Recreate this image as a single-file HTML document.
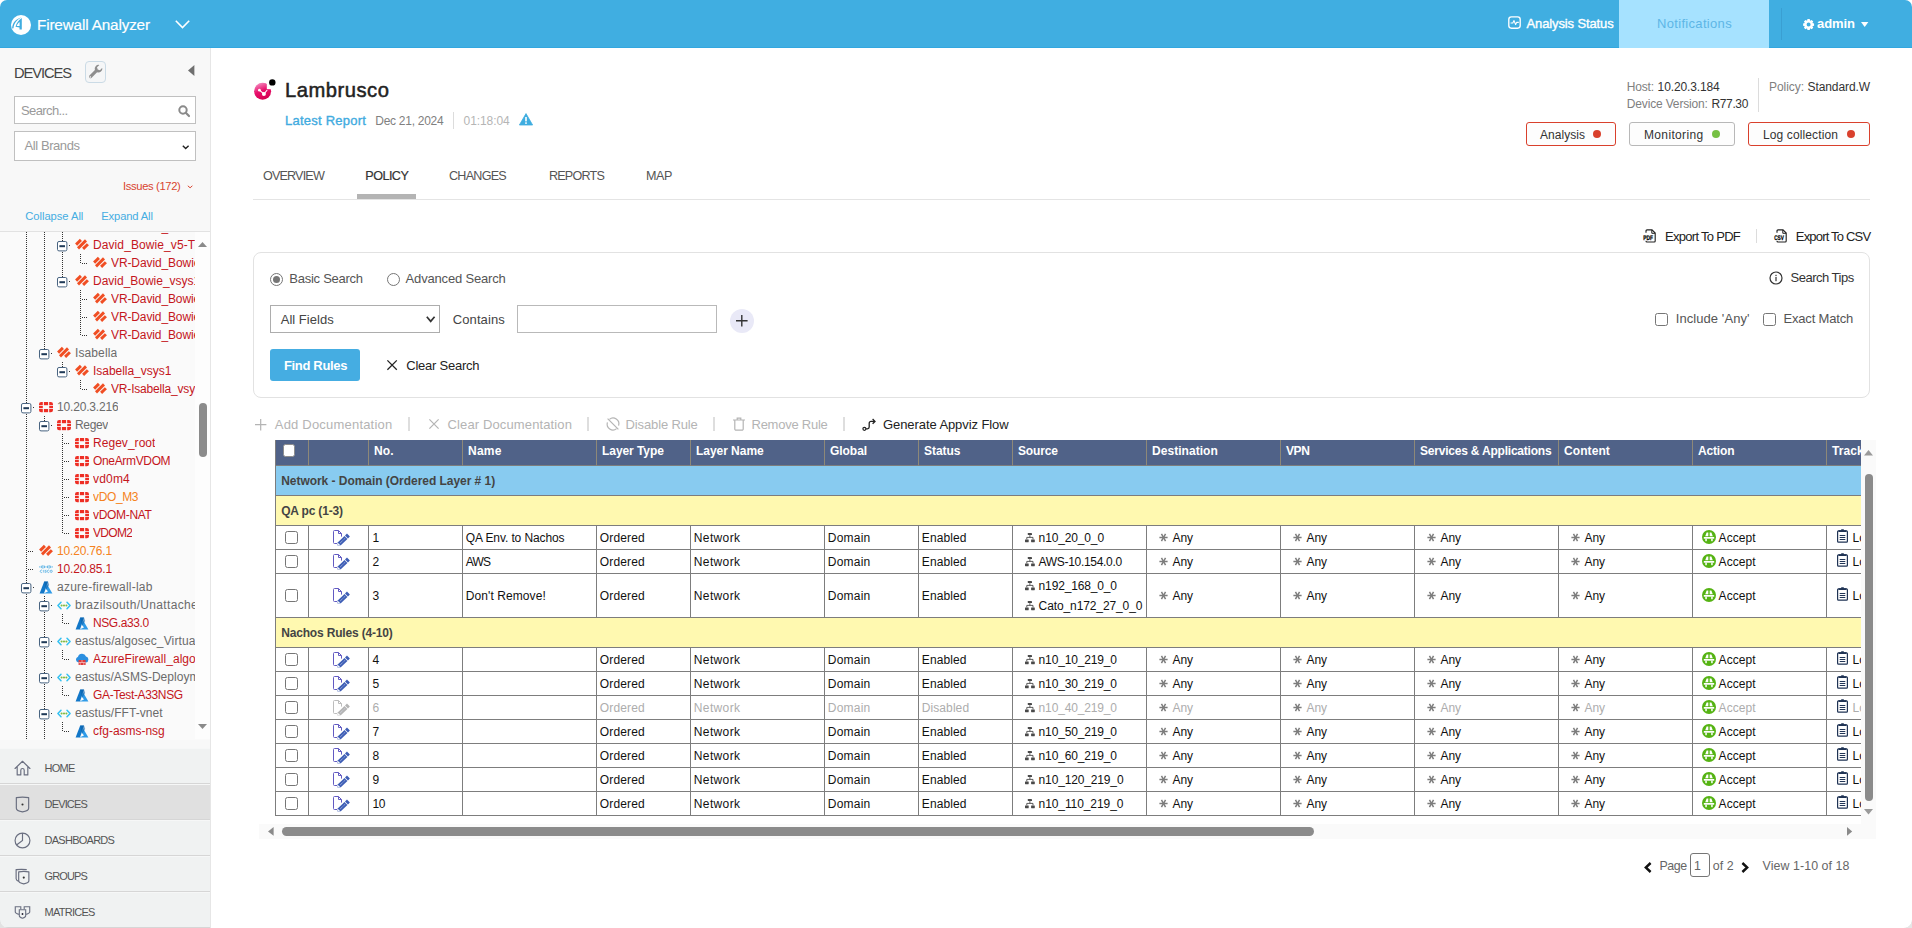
<!DOCTYPE html>
<html lang="en"><head><meta charset="utf-8"><title>Firewall Analyzer - Lambrusco - Policy</title>
<style>
*{box-sizing:border-box;margin:0;padding:0}
html,body{width:1912px;height:928px;overflow:hidden;background:#fff}
body{font-family:"Liberation Sans",sans-serif;color:#333}
#app{position:relative;width:1912px;height:928px;overflow:hidden;background:#fff;border-radius:7px 7px 0 0}
.t{position:absolute;white-space:nowrap;display:block}
.b{position:absolute;display:block}
.i{position:absolute;display:block;overflow:visible}
header{position:absolute;left:0;top:0;width:1912px;height:48px;background:#40aee1;box-shadow:inset 0 -1px 0 #33a7df}
.crn{position:absolute;bottom:0;width:8px;height:8px}
aside{position:absolute;left:0;top:48px;width:211px;height:880px;background:#f8f8f8;border-right:1px solid #e6e6e6}
main{position:absolute;left:211px;top:48px;width:1701px;height:880px;background:#fff}
a{text-decoration:none;color:inherit}
h1,h2,h3{font-weight:normal}
table{border-collapse:collapse;table-layout:fixed;position:absolute;left:0;top:0}
td,th{border:1px solid #7d7d7d;padding:0;overflow:hidden;white-space:nowrap;text-align:left;vertical-align:middle;position:relative}
</style></head>
<body>
<div id="app">
<header><svg class="i" style="left:11.4px;top:14.5px" width="20" height="20" viewBox="0 0 20 20" ><circle cx="10" cy="10" r="10" fill="#fff"/><path d="M1.1 13.4 C1.3 8 5 3.6 10.6 2.5 C6 4.5 2.9 8.4 2.5 13.3 Z" fill="#3fade0"/><path d="M10.8 3.1 L10.8 14.4 L8.5 14.4 L8.5 12.5 L4.5 11.7 C5.5 8 7.6 5 10.8 3.1 Z M8.6 6.9 L8.6 10.9 L5.7 10.9 C6.3 9.3 7.2 7.9 8.6 6.9 Z" fill="#3fade0" fill-rule="evenodd"/></svg><h1 class="t" style="left:37px;top:14.600000000000001px;font-size:15.3px;line-height:19px;letter-spacing:-0.16px;color:#fff;-webkit-text-stroke:0.2px #fff;">Firewall Analyzer</h1><svg class="i" style="left:175px;top:19.5px" width="15" height="8.5" viewBox="0 0 15 8.5" ><path d="M0.8 0.8 L7.5 7.5 L14.2 0.8" fill="none" stroke="#fff" stroke-width="1.6"/></svg><svg class="i" style="left:1507.8px;top:15.5px" width="13" height="13" viewBox="0 0 13 13" ><rect x="0.8" y="0.8" width="11.4" height="11.4" rx="2.6" fill="none" stroke="#fff" stroke-width="1.35"/><path d="M2.6 7 H4.8 L6 4.6 L7.6 8.6 L8.6 6.4 H10.8" fill="none" stroke="#fff" stroke-width="1.1" stroke-linejoin="round"/></svg><span class="t" style="left:1526.5px;top:15px;font-size:13px;line-height:17px;letter-spacing:-0.12px;color:#fff;-webkit-text-stroke:0.35px #fff;">Analysis Status</span><div class="b" style="left:1619px;top:0px;width:150px;height:48px;background:#a6e2ff"></div><a class="t" href="#" style="left:1657px;top:15px;font-size:13px;line-height:17px;letter-spacing:0.32px;color:#5db6e6;">Notifications</a><div class="b" style="left:1781px;top:8px;width:1px;height:32px;background:#3a9fd2"></div><svg class="i" style="left:1802.6px;top:18.6px" width="11.2" height="11.2" viewBox="0 0 11.2 11.2" ><path d="M11.09 4.49 L11.09 6.71 L9.39 7.16 L9.38 7.18 L10.27 8.69 L8.69 10.27 L7.18 9.38 L7.16 9.39 L6.71 11.09 L4.49 11.09 L4.04 9.39 L4.02 9.38 L2.51 10.27 L0.93 8.69 L1.82 7.18 L1.81 7.16 L0.11 6.71 L0.11 4.49 L1.81 4.04 L1.82 4.02 L0.93 2.51 L2.51 0.93 L4.02 1.82 L4.04 1.81 L4.49 0.11 L6.71 0.11 L7.16 1.81 L7.18 1.82 L8.69 0.93 L10.27 2.51 L9.38 4.02 L9.39 4.04 Z M5.6 3.6 A2 2 0 1 0 5.6 7.6 A2 2 0 1 0 5.6 3.6 Z" fill="#fff" fill-rule="evenodd"/></svg><span class="t" style="left:1817px;top:15.2px;font-size:13px;line-height:17px;letter-spacing:-0.06px;color:#fff;font-weight:bold;">admin</span><svg class="i" style="left:1860.5px;top:22px" width="7.4" height="5" viewBox="0 0 7.4 5" ><path d="M0 0 L3.7 5 L7.4 0 Z" fill="#fff"/></svg></header>
<aside><h2 class="t" style="left:14px;top:15.599999999999994px;font-size:14.7px;line-height:18px;letter-spacing:-1.08px;color:#444;">DEVICES</h2><div class="b" style="left:85px;top:13px;width:21px;height:22px;border:1px solid #cbdbe6;border-radius:4px;background:#f5f6f7"></div><svg class="i" style="left:87.8px;top:16.200000000000003px" width="15.5" height="15.5" viewBox="0 0 15.5 15.5" ><path d="M11.4 0.9 A4 4 0 0 0 6.9 6.1 L1.2 11.8 A1.6 1.6 0 0 0 3.4 14 L9.1 8.3 A4 4 0 0 0 14.3 3.8 L11.9 6.2 L9.7 5.5 L9 3.3 Z M2.3 12.2 A0.7 0.7 0 1 0 2.31 12.2 Z" fill="#8e8e8e" fill-rule="evenodd"/></svg><svg class="i" style="left:188px;top:17px" width="6.4" height="11" viewBox="0 0 6.4 11" ><path d="M6.4 0 L0 5.5 L6.4 11 Z" fill="#6f6f6f"/></svg><div class="b" style="left:14px;top:48px;width:182px;height:28px;border:1px solid #c0c0c0;background:#fff"></div><span class="t" style="left:21px;top:53.8px;font-size:13px;line-height:17px;letter-spacing:-0.61px;color:#9a9a9a;">Search...</span><svg class="i" style="left:178px;top:57px" width="12" height="12" viewBox="0 0 12 12" ><circle cx="5" cy="5" r="3.7" fill="none" stroke="#8a8a8a" stroke-width="2"/><path d="M7.8 7.8 L11 11" stroke="#8a8a8a" stroke-width="2.2" stroke-linecap="round"/></svg><div class="b" style="left:14px;top:83px;width:182px;height:30px;border:1px solid #c0c0c0;background:#fff"></div><span class="t" style="left:24.5px;top:88.6px;font-size:13px;line-height:17px;letter-spacing:-0.42px;color:#9a9a9a;">All Brands</span><svg class="i" style="left:182.3px;top:96.6px" width="7.4" height="4.6" viewBox="0 0 7.4 4.6" ><path d="M0.8 0.8 L3.7 3.5999999999999996 L6.6000000000000005 0.8" fill="none" stroke="#222" stroke-width="1.4"/></svg><a class="t" href="#" style="left:123px;top:131px;font-size:11.2px;line-height:14px;letter-spacing:-0.34px;color:#d9442f;">Issues (172)</a><svg class="i" style="left:187px;top:136.6px" width="6.2" height="3.8" viewBox="0 0 6.2 3.8" ><path d="M0.8 0.8 L3.1 2.8 L5.4 0.8" fill="none" stroke="#d9442f" stroke-width="1"/></svg><a class="t" href="#" style="left:25.3px;top:160.8px;font-size:11.2px;line-height:14px;letter-spacing:-0.04px;color:#45ade2;">Collapse All</a><a class="t" href="#" style="left:101.3px;top:160.8px;font-size:11.2px;line-height:14px;letter-spacing:-0.14px;color:#45ade2;">Expand All</a><div class="b" style="left:0;top:183px;width:210px;height:509px;border-top:1px solid #e2e2e2;background:#fafafa;overflow:hidden"><div class="b" style="left:26px;top:0px;width:1px;height:507px;background:repeating-linear-gradient(to bottom,#333 0,#333 1px,transparent 1px,transparent 2px)"></div><div class="b" style="left:44px;top:0px;width:1px;height:122px;background:repeating-linear-gradient(to bottom,#333 0,#333 1px,transparent 1px,transparent 2px)"></div><div class="b" style="left:44px;top:184px;width:1px;height:10px;background:repeating-linear-gradient(to bottom,#333 0,#333 1px,transparent 1px,transparent 2px)"></div><div class="b" style="left:44px;top:364px;width:1px;height:143px;background:repeating-linear-gradient(to bottom,#333 0,#333 1px,transparent 1px,transparent 2px)"></div><div class="b" style="left:62px;top:0px;width:1px;height:50px;background:repeating-linear-gradient(to bottom,#333 0,#333 1px,transparent 1px,transparent 2px)"></div><div class="b" style="left:62px;top:130px;width:1px;height:10px;background:repeating-linear-gradient(to bottom,#333 0,#333 1px,transparent 1px,transparent 2px)"></div><div class="b" style="left:62px;top:202px;width:1px;height:100px;background:repeating-linear-gradient(to bottom,#333 0,#333 1px,transparent 1px,transparent 2px)"></div><div class="b" style="left:62px;top:382px;width:1px;height:10px;background:repeating-linear-gradient(to bottom,#333 0,#333 1px,transparent 1px,transparent 2px)"></div><div class="b" style="left:62px;top:418px;width:1px;height:10px;background:repeating-linear-gradient(to bottom,#333 0,#333 1px,transparent 1px,transparent 2px)"></div><div class="b" style="left:62px;top:454px;width:1px;height:10px;background:repeating-linear-gradient(to bottom,#333 0,#333 1px,transparent 1px,transparent 2px)"></div><div class="b" style="left:62px;top:490px;width:1px;height:10px;background:repeating-linear-gradient(to bottom,#333 0,#333 1px,transparent 1px,transparent 2px)"></div><div class="b" style="left:80px;top:22px;width:1px;height:10px;background:repeating-linear-gradient(to bottom,#333 0,#333 1px,transparent 1px,transparent 2px)"></div><div class="b" style="left:80px;top:58px;width:1px;height:46px;background:repeating-linear-gradient(to bottom,#333 0,#333 1px,transparent 1px,transparent 2px)"></div><div class="b" style="left:80px;top:148px;width:1px;height:10px;background:repeating-linear-gradient(to bottom,#333 0,#333 1px,transparent 1px,transparent 2px)"></div><div class="b" style="left:81px;top:-5px;width:6px;height:1px;background:repeating-linear-gradient(to right,transparent 0,transparent 1px,#333 1px,#333 2px)"></div><svg class="i" style="left:93px;top:-10.6px" width="14" height="11" viewBox="0 0 14 11" ><g stroke="#f04e23" stroke-width="2.9" stroke-linecap="butt"><path d="M1.1 5.6 L5.9 0.9"/><path d="M3 9.4 L11 1.4"/><path d="M8.1 9.9 L12.9 5.2"/></g></svg><span class="t" style="left:111px;top:-13px;font-size:12px;line-height:16px;letter-spacing:-0.1px;color:#c4161c;max-width:84px;overflow:hidden">VR-David_Bowie_v5</span><svg class="i" style="left:57px;top:8.8px" width="10.4" height="10.4" viewBox="0 0 10.4 10.4" ><rect x="0.5" y="0.5" width="9.4" height="9.4" rx="1.5" fill="#fff" stroke="#46627f"/><rect x="2.4" y="4.2" width="5.6" height="2" fill="#1f3a57"/></svg><div class="b" style="left:69px;top:13px;width:2px;height:1px;background:repeating-linear-gradient(to right,#333 0,#333 1px,transparent 1px,transparent 2px)"></div><svg class="i" style="left:75px;top:7.4px" width="14" height="11" viewBox="0 0 14 11" ><g stroke="#f04e23" stroke-width="2.9" stroke-linecap="butt"><path d="M1.1 5.6 L5.9 0.9"/><path d="M3 9.4 L11 1.4"/><path d="M8.1 9.9 L12.9 5.2"/></g></svg><span class="t" style="left:93px;top:5px;font-size:12px;line-height:16px;letter-spacing:0.09px;color:#c4161c;max-width:102px;overflow:hidden">David_Bowie_v5-Tr</span><div class="b" style="left:81px;top:31px;width:6px;height:1px;background:repeating-linear-gradient(to right,transparent 0,transparent 1px,#333 1px,#333 2px)"></div><svg class="i" style="left:93px;top:25.4px" width="14" height="11" viewBox="0 0 14 11" ><g stroke="#f04e23" stroke-width="2.9" stroke-linecap="butt"><path d="M1.1 5.6 L5.9 0.9"/><path d="M3 9.4 L11 1.4"/><path d="M8.1 9.9 L12.9 5.2"/></g></svg><span class="t" style="left:111px;top:23px;font-size:12px;line-height:16px;letter-spacing:-0.1px;color:#c4161c;max-width:84px;overflow:hidden">VR-David_Bowie_v5</span><svg class="i" style="left:57px;top:44.8px" width="10.4" height="10.4" viewBox="0 0 10.4 10.4" ><rect x="0.5" y="0.5" width="9.4" height="9.4" rx="1.5" fill="#fff" stroke="#46627f"/><rect x="2.4" y="4.2" width="5.6" height="2" fill="#1f3a57"/></svg><div class="b" style="left:69px;top:49px;width:2px;height:1px;background:repeating-linear-gradient(to right,#333 0,#333 1px,transparent 1px,transparent 2px)"></div><svg class="i" style="left:75px;top:43.4px" width="14" height="11" viewBox="0 0 14 11" ><g stroke="#f04e23" stroke-width="2.9" stroke-linecap="butt"><path d="M1.1 5.6 L5.9 0.9"/><path d="M3 9.4 L11 1.4"/><path d="M8.1 9.9 L12.9 5.2"/></g></svg><span class="t" style="left:93px;top:41px;font-size:12px;line-height:16px;letter-spacing:-0.01px;color:#c4161c;max-width:102px;overflow:hidden">David_Bowie_vsys1</span><div class="b" style="left:81px;top:67px;width:6px;height:1px;background:repeating-linear-gradient(to right,transparent 0,transparent 1px,#333 1px,#333 2px)"></div><svg class="i" style="left:93px;top:61.4px" width="14" height="11" viewBox="0 0 14 11" ><g stroke="#f04e23" stroke-width="2.9" stroke-linecap="butt"><path d="M1.1 5.6 L5.9 0.9"/><path d="M3 9.4 L11 1.4"/><path d="M8.1 9.9 L12.9 5.2"/></g></svg><span class="t" style="left:111px;top:59px;font-size:12px;line-height:16px;letter-spacing:-0.12px;color:#c4161c;max-width:84px;overflow:hidden">VR-David_Bowie_vs</span><div class="b" style="left:81px;top:85px;width:6px;height:1px;background:repeating-linear-gradient(to right,transparent 0,transparent 1px,#333 1px,#333 2px)"></div><svg class="i" style="left:93px;top:79.4px" width="14" height="11" viewBox="0 0 14 11" ><g stroke="#f04e23" stroke-width="2.9" stroke-linecap="butt"><path d="M1.1 5.6 L5.9 0.9"/><path d="M3 9.4 L11 1.4"/><path d="M8.1 9.9 L12.9 5.2"/></g></svg><span class="t" style="left:111px;top:77px;font-size:12px;line-height:16px;letter-spacing:-0.12px;color:#c4161c;max-width:84px;overflow:hidden">VR-David_Bowie_vs</span><div class="b" style="left:81px;top:103px;width:6px;height:1px;background:repeating-linear-gradient(to right,transparent 0,transparent 1px,#333 1px,#333 2px)"></div><svg class="i" style="left:93px;top:97.4px" width="14" height="11" viewBox="0 0 14 11" ><g stroke="#f04e23" stroke-width="2.9" stroke-linecap="butt"><path d="M1.1 5.6 L5.9 0.9"/><path d="M3 9.4 L11 1.4"/><path d="M8.1 9.9 L12.9 5.2"/></g></svg><span class="t" style="left:111px;top:95px;font-size:12px;line-height:16px;letter-spacing:-0.12px;color:#c4161c;max-width:84px;overflow:hidden">VR-David_Bowie_vs</span><svg class="i" style="left:39px;top:116.8px" width="10.4" height="10.4" viewBox="0 0 10.4 10.4" ><rect x="0.5" y="0.5" width="9.4" height="9.4" rx="1.5" fill="#fff" stroke="#46627f"/><rect x="2.4" y="4.2" width="5.6" height="2" fill="#1f3a57"/></svg><div class="b" style="left:51px;top:121px;width:2px;height:1px;background:repeating-linear-gradient(to right,#333 0,#333 1px,transparent 1px,transparent 2px)"></div><svg class="i" style="left:57px;top:115.4px" width="14" height="11" viewBox="0 0 14 11" ><g stroke="#f04e23" stroke-width="2.9" stroke-linecap="butt"><path d="M1.1 5.6 L5.9 0.9"/><path d="M3 9.4 L11 1.4"/><path d="M8.1 9.9 L12.9 5.2"/></g></svg><span class="t" style="left:75px;top:113px;font-size:12px;line-height:16px;letter-spacing:0.11px;color:#6b6b6b;max-width:120px;overflow:hidden">Isabella</span><svg class="i" style="left:57px;top:134.8px" width="10.4" height="10.4" viewBox="0 0 10.4 10.4" ><rect x="0.5" y="0.5" width="9.4" height="9.4" rx="1.5" fill="#fff" stroke="#46627f"/><rect x="2.4" y="4.2" width="5.6" height="2" fill="#1f3a57"/></svg><div class="b" style="left:69px;top:139px;width:2px;height:1px;background:repeating-linear-gradient(to right,#333 0,#333 1px,transparent 1px,transparent 2px)"></div><svg class="i" style="left:75px;top:133.4px" width="14" height="11" viewBox="0 0 14 11" ><g stroke="#f04e23" stroke-width="2.9" stroke-linecap="butt"><path d="M1.1 5.6 L5.9 0.9"/><path d="M3 9.4 L11 1.4"/><path d="M8.1 9.9 L12.9 5.2"/></g></svg><span class="t" style="left:93px;top:131px;font-size:12px;line-height:16px;letter-spacing:-0.03px;color:#c4161c;max-width:102px;overflow:hidden">Isabella_vsys1</span><div class="b" style="left:81px;top:157px;width:6px;height:1px;background:repeating-linear-gradient(to right,transparent 0,transparent 1px,#333 1px,#333 2px)"></div><svg class="i" style="left:93px;top:151.4px" width="14" height="11" viewBox="0 0 14 11" ><g stroke="#f04e23" stroke-width="2.9" stroke-linecap="butt"><path d="M1.1 5.6 L5.9 0.9"/><path d="M3 9.4 L11 1.4"/><path d="M8.1 9.9 L12.9 5.2"/></g></svg><span class="t" style="left:111px;top:149px;font-size:12px;line-height:16px;letter-spacing:-0.18px;color:#c4161c;max-width:84px;overflow:hidden">VR-Isabella_vsys1</span><svg class="i" style="left:21px;top:170.8px" width="10.4" height="10.4" viewBox="0 0 10.4 10.4" ><rect x="0.5" y="0.5" width="9.4" height="9.4" rx="1.5" fill="#fff" stroke="#46627f"/><rect x="2.4" y="4.2" width="5.6" height="2" fill="#1f3a57"/></svg><div class="b" style="left:33px;top:175px;width:2px;height:1px;background:repeating-linear-gradient(to right,#333 0,#333 1px,transparent 1px,transparent 2px)"></div><svg class="i" style="left:39px;top:170px" width="14" height="10.2" viewBox="0 0 14 10.2" ><g fill="#ee2e24"><path d="M0 3.2 V2.2 A2.2 2.2 0 0 1 2.2 0 H3.8 V3.2 Z"/><rect x="4.9" y="0" width="4.2" height="3.2"/><path d="M10.2 0 H11.8 A2.2 2.2 0 0 1 14 2.2 V3.2 H10.2 Z"/><rect x="0" y="4" width="3.8" height="2.2"/><rect x="10.2" y="4" width="3.8" height="2.2"/><path d="M0 7 H3.8 V10.2 H2.2 A2.2 2.2 0 0 1 0 8 Z"/><rect x="4.9" y="7" width="4.2" height="3.2"/><path d="M10.2 7 H14 V8 A2.2 2.2 0 0 1 11.8 10.2 H10.2 Z"/></g></svg><span class="t" style="left:57px;top:167px;font-size:12px;line-height:16px;letter-spacing:-0.18px;color:#6b6b6b;max-width:138px;overflow:hidden">10.20.3.216</span><svg class="i" style="left:39px;top:188.8px" width="10.4" height="10.4" viewBox="0 0 10.4 10.4" ><rect x="0.5" y="0.5" width="9.4" height="9.4" rx="1.5" fill="#fff" stroke="#46627f"/><rect x="2.4" y="4.2" width="5.6" height="2" fill="#1f3a57"/></svg><div class="b" style="left:51px;top:193px;width:2px;height:1px;background:repeating-linear-gradient(to right,#333 0,#333 1px,transparent 1px,transparent 2px)"></div><svg class="i" style="left:57px;top:188px" width="14" height="10.2" viewBox="0 0 14 10.2" ><g fill="#ee2e24"><path d="M0 3.2 V2.2 A2.2 2.2 0 0 1 2.2 0 H3.8 V3.2 Z"/><rect x="4.9" y="0" width="4.2" height="3.2"/><path d="M10.2 0 H11.8 A2.2 2.2 0 0 1 14 2.2 V3.2 H10.2 Z"/><rect x="0" y="4" width="3.8" height="2.2"/><rect x="10.2" y="4" width="3.8" height="2.2"/><path d="M0 7 H3.8 V10.2 H2.2 A2.2 2.2 0 0 1 0 8 Z"/><rect x="4.9" y="7" width="4.2" height="3.2"/><path d="M10.2 7 H14 V8 A2.2 2.2 0 0 1 11.8 10.2 H10.2 Z"/></g></svg><span class="t" style="left:75px;top:185px;font-size:12px;line-height:16px;letter-spacing:-0.35px;color:#6b6b6b;max-width:120px;overflow:hidden">Regev</span><div class="b" style="left:63px;top:211px;width:6px;height:1px;background:repeating-linear-gradient(to right,transparent 0,transparent 1px,#333 1px,#333 2px)"></div><svg class="i" style="left:75px;top:206px" width="14" height="10.2" viewBox="0 0 14 10.2" ><g fill="#ee2e24"><path d="M0 3.2 V2.2 A2.2 2.2 0 0 1 2.2 0 H3.8 V3.2 Z"/><rect x="4.9" y="0" width="4.2" height="3.2"/><path d="M10.2 0 H11.8 A2.2 2.2 0 0 1 14 2.2 V3.2 H10.2 Z"/><rect x="0" y="4" width="3.8" height="2.2"/><rect x="10.2" y="4" width="3.8" height="2.2"/><path d="M0 7 H3.8 V10.2 H2.2 A2.2 2.2 0 0 1 0 8 Z"/><rect x="4.9" y="7" width="4.2" height="3.2"/><path d="M10.2 7 H14 V8 A2.2 2.2 0 0 1 11.8 10.2 H10.2 Z"/></g></svg><span class="t" style="left:93px;top:203px;font-size:12px;line-height:16px;letter-spacing:0.04px;color:#c4161c;max-width:102px;overflow:hidden">Regev_root</span><div class="b" style="left:63px;top:229px;width:6px;height:1px;background:repeating-linear-gradient(to right,transparent 0,transparent 1px,#333 1px,#333 2px)"></div><svg class="i" style="left:75px;top:224px" width="14" height="10.2" viewBox="0 0 14 10.2" ><g fill="#ee2e24"><path d="M0 3.2 V2.2 A2.2 2.2 0 0 1 2.2 0 H3.8 V3.2 Z"/><rect x="4.9" y="0" width="4.2" height="3.2"/><path d="M10.2 0 H11.8 A2.2 2.2 0 0 1 14 2.2 V3.2 H10.2 Z"/><rect x="0" y="4" width="3.8" height="2.2"/><rect x="10.2" y="4" width="3.8" height="2.2"/><path d="M0 7 H3.8 V10.2 H2.2 A2.2 2.2 0 0 1 0 8 Z"/><rect x="4.9" y="7" width="4.2" height="3.2"/><path d="M10.2 7 H14 V8 A2.2 2.2 0 0 1 11.8 10.2 H10.2 Z"/></g></svg><span class="t" style="left:93px;top:221px;font-size:12px;line-height:16px;letter-spacing:-0.34px;color:#c4161c;max-width:102px;overflow:hidden">OneArmVDOM</span><div class="b" style="left:63px;top:247px;width:6px;height:1px;background:repeating-linear-gradient(to right,transparent 0,transparent 1px,#333 1px,#333 2px)"></div><svg class="i" style="left:75px;top:242px" width="14" height="10.2" viewBox="0 0 14 10.2" ><g fill="#ee2e24"><path d="M0 3.2 V2.2 A2.2 2.2 0 0 1 2.2 0 H3.8 V3.2 Z"/><rect x="4.9" y="0" width="4.2" height="3.2"/><path d="M10.2 0 H11.8 A2.2 2.2 0 0 1 14 2.2 V3.2 H10.2 Z"/><rect x="0" y="4" width="3.8" height="2.2"/><rect x="10.2" y="4" width="3.8" height="2.2"/><path d="M0 7 H3.8 V10.2 H2.2 A2.2 2.2 0 0 1 0 8 Z"/><rect x="4.9" y="7" width="4.2" height="3.2"/><path d="M10.2 7 H14 V8 A2.2 2.2 0 0 1 11.8 10.2 H10.2 Z"/></g></svg><span class="t" style="left:93px;top:239px;font-size:12px;line-height:16px;letter-spacing:0.19px;color:#c4161c;max-width:102px;overflow:hidden">vd0m4</span><div class="b" style="left:63px;top:265px;width:6px;height:1px;background:repeating-linear-gradient(to right,transparent 0,transparent 1px,#333 1px,#333 2px)"></div><svg class="i" style="left:75px;top:260px" width="14" height="10.2" viewBox="0 0 14 10.2" ><g fill="#ee2e24"><path d="M0 3.2 V2.2 A2.2 2.2 0 0 1 2.2 0 H3.8 V3.2 Z"/><rect x="4.9" y="0" width="4.2" height="3.2"/><path d="M10.2 0 H11.8 A2.2 2.2 0 0 1 14 2.2 V3.2 H10.2 Z"/><rect x="0" y="4" width="3.8" height="2.2"/><rect x="10.2" y="4" width="3.8" height="2.2"/><path d="M0 7 H3.8 V10.2 H2.2 A2.2 2.2 0 0 1 0 8 Z"/><rect x="4.9" y="7" width="4.2" height="3.2"/><path d="M10.2 7 H14 V8 A2.2 2.2 0 0 1 11.8 10.2 H10.2 Z"/></g></svg><span class="t" style="left:93px;top:257px;font-size:12px;line-height:16px;letter-spacing:-0.37px;color:#f58220;max-width:102px;overflow:hidden">vDO_M3</span><div class="b" style="left:63px;top:283px;width:6px;height:1px;background:repeating-linear-gradient(to right,transparent 0,transparent 1px,#333 1px,#333 2px)"></div><svg class="i" style="left:75px;top:278px" width="14" height="10.2" viewBox="0 0 14 10.2" ><g fill="#ee2e24"><path d="M0 3.2 V2.2 A2.2 2.2 0 0 1 2.2 0 H3.8 V3.2 Z"/><rect x="4.9" y="0" width="4.2" height="3.2"/><path d="M10.2 0 H11.8 A2.2 2.2 0 0 1 14 2.2 V3.2 H10.2 Z"/><rect x="0" y="4" width="3.8" height="2.2"/><rect x="10.2" y="4" width="3.8" height="2.2"/><path d="M0 7 H3.8 V10.2 H2.2 A2.2 2.2 0 0 1 0 8 Z"/><rect x="4.9" y="7" width="4.2" height="3.2"/><path d="M10.2 7 H14 V8 A2.2 2.2 0 0 1 11.8 10.2 H10.2 Z"/></g></svg><span class="t" style="left:93px;top:275px;font-size:12px;line-height:16px;letter-spacing:-0.31px;color:#c4161c;max-width:102px;overflow:hidden">vDOM-NAT</span><div class="b" style="left:63px;top:301px;width:6px;height:1px;background:repeating-linear-gradient(to right,transparent 0,transparent 1px,#333 1px,#333 2px)"></div><svg class="i" style="left:75px;top:296px" width="14" height="10.2" viewBox="0 0 14 10.2" ><g fill="#ee2e24"><path d="M0 3.2 V2.2 A2.2 2.2 0 0 1 2.2 0 H3.8 V3.2 Z"/><rect x="4.9" y="0" width="4.2" height="3.2"/><path d="M10.2 0 H11.8 A2.2 2.2 0 0 1 14 2.2 V3.2 H10.2 Z"/><rect x="0" y="4" width="3.8" height="2.2"/><rect x="10.2" y="4" width="3.8" height="2.2"/><path d="M0 7 H3.8 V10.2 H2.2 A2.2 2.2 0 0 1 0 8 Z"/><rect x="4.9" y="7" width="4.2" height="3.2"/><path d="M10.2 7 H14 V8 A2.2 2.2 0 0 1 11.8 10.2 H10.2 Z"/></g></svg><span class="t" style="left:93px;top:293px;font-size:12px;line-height:16px;letter-spacing:-0.69px;color:#c4161c;max-width:102px;overflow:hidden">VDOM2</span><div class="b" style="left:27px;top:319px;width:6px;height:1px;background:repeating-linear-gradient(to right,transparent 0,transparent 1px,#333 1px,#333 2px)"></div><svg class="i" style="left:39px;top:313.4px" width="14" height="11" viewBox="0 0 14 11" ><g stroke="#f04e23" stroke-width="2.9" stroke-linecap="butt"><path d="M1.1 5.6 L5.9 0.9"/><path d="M3 9.4 L11 1.4"/><path d="M8.1 9.9 L12.9 5.2"/></g></svg><span class="t" style="left:57px;top:311px;font-size:12px;line-height:16px;letter-spacing:-0.18px;color:#f58220;max-width:138px;overflow:hidden">10.20.76.1</span><div class="b" style="left:27px;top:337px;width:6px;height:1px;background:repeating-linear-gradient(to right,transparent 0,transparent 1px,#333 1px,#333 2px)"></div><svg class="i" style="left:39px;top:333px" width="14" height="8" viewBox="0 0 14 8" ><g stroke="#62b5e5" stroke-width="1" stroke-linecap="round"><path d="M0.80 1.60 V2.20"/><path d="M2.35 1.10 V2.70"/><path d="M3.90 0.50 V3.30"/><path d="M5.45 1.10 V2.70"/><path d="M7.00 1.60 V2.20"/><path d="M8.55 1.10 V2.70"/><path d="M10.10 0.50 V3.30"/><path d="M11.65 1.10 V2.70"/><path d="M13.20 1.60 V2.20"/></g><g fill="none" stroke="#62b5e5" stroke-width="0.9"><path d="M3.2 5.4 A1.2 1.2 0 1 0 3.2 7.2"/><path d="M4.8 4.9 V7.6"/><path d="M7.4 5.2 Q6 5 6.2 6 Q7.6 6.4 7.2 7.2 Q6.6 7.6 5.9 7.3"/><path d="M10.2 5.4 A1.2 1.2 0 1 0 10.2 7.2"/><circle cx="12.2" cy="6.3" r="1.1"/></g></svg><span class="t" style="left:57px;top:329px;font-size:12px;line-height:16px;letter-spacing:-0.18px;color:#c4161c;max-width:138px;overflow:hidden">10.20.85.1</span><svg class="i" style="left:21px;top:350.8px" width="10.4" height="10.4" viewBox="0 0 10.4 10.4" ><rect x="0.5" y="0.5" width="9.4" height="9.4" rx="1.5" fill="#fff" stroke="#46627f"/><rect x="2.4" y="4.2" width="5.6" height="2" fill="#1f3a57"/></svg><div class="b" style="left:33px;top:355px;width:2px;height:1px;background:repeating-linear-gradient(to right,#333 0,#333 1px,transparent 1px,transparent 2px)"></div><svg class="i" style="left:39px;top:348.5px" width="14" height="13" viewBox="0 0 14 13" ><path d="M5.2 0.6 H9 L5 12.4 H0.6 Z" fill="#1277c8"/><path d="M8 3.2 L13.4 12.4 H4.4 L9 10.6 L6.6 7.2 Z" fill="#2f9be8"/><path d="M5.2 0.6 H9 L10.2 4 L7 9 Z" fill="#0a5ea8" opacity="0.55"/></svg><span class="t" style="left:57px;top:347px;font-size:12px;line-height:16px;letter-spacing:0.24px;color:#6b6b6b;max-width:138px;overflow:hidden">azure-firewall-lab</span><svg class="i" style="left:39px;top:368.8px" width="10.4" height="10.4" viewBox="0 0 10.4 10.4" ><rect x="0.5" y="0.5" width="9.4" height="9.4" rx="1.5" fill="#fff" stroke="#46627f"/><rect x="2.4" y="4.2" width="5.6" height="2" fill="#1f3a57"/></svg><div class="b" style="left:51px;top:373px;width:2px;height:1px;background:repeating-linear-gradient(to right,#333 0,#333 1px,transparent 1px,transparent 2px)"></div><svg class="i" style="left:57px;top:368.5px" width="14" height="9" viewBox="0 0 14 9" ><path d="M4 1.2 L0.9 4.5 L4 7.8" fill="none" stroke="#35c1f1" stroke-width="1.5" stroke-linecap="round" stroke-linejoin="round"/><path d="M10 1.2 L13.1 4.5 L10 7.8" fill="none" stroke="#35c1f1" stroke-width="1.5" stroke-linecap="round" stroke-linejoin="round"/><circle cx="4.6" cy="4.5" r="1.05" fill="#7fba42"/><circle cx="7" cy="4.5" r="1.05" fill="#7fba42"/><circle cx="9.4" cy="4.5" r="1.05" fill="#7fba42"/></svg><span class="t" style="left:75px;top:365px;font-size:12px;line-height:16px;letter-spacing:0.33px;color:#6b6b6b;max-width:120px;overflow:hidden">brazilsouth/Unattached</span><div class="b" style="left:63px;top:391px;width:6px;height:1px;background:repeating-linear-gradient(to right,transparent 0,transparent 1px,#333 1px,#333 2px)"></div><svg class="i" style="left:75px;top:384.5px" width="14" height="13" viewBox="0 0 14 13" ><path d="M5.2 0.6 H9 L5 12.4 H0.6 Z" fill="#1277c8"/><path d="M8 3.2 L13.4 12.4 H4.4 L9 10.6 L6.6 7.2 Z" fill="#2f9be8"/><path d="M5.2 0.6 H9 L10.2 4 L7 9 Z" fill="#0a5ea8" opacity="0.55"/></svg><span class="t" style="left:93px;top:383px;font-size:12px;line-height:16px;letter-spacing:-0.4px;color:#c4161c;max-width:102px;overflow:hidden">NSG.a33.0</span><svg class="i" style="left:39px;top:404.8px" width="10.4" height="10.4" viewBox="0 0 10.4 10.4" ><rect x="0.5" y="0.5" width="9.4" height="9.4" rx="1.5" fill="#fff" stroke="#46627f"/><rect x="2.4" y="4.2" width="5.6" height="2" fill="#1f3a57"/></svg><div class="b" style="left:51px;top:409px;width:2px;height:1px;background:repeating-linear-gradient(to right,#333 0,#333 1px,transparent 1px,transparent 2px)"></div><svg class="i" style="left:57px;top:404.5px" width="14" height="9" viewBox="0 0 14 9" ><path d="M4 1.2 L0.9 4.5 L4 7.8" fill="none" stroke="#35c1f1" stroke-width="1.5" stroke-linecap="round" stroke-linejoin="round"/><path d="M10 1.2 L13.1 4.5 L10 7.8" fill="none" stroke="#35c1f1" stroke-width="1.5" stroke-linecap="round" stroke-linejoin="round"/><circle cx="4.6" cy="4.5" r="1.05" fill="#7fba42"/><circle cx="7" cy="4.5" r="1.05" fill="#7fba42"/><circle cx="9.4" cy="4.5" r="1.05" fill="#7fba42"/></svg><span class="t" style="left:75px;top:401px;font-size:12px;line-height:16px;letter-spacing:0.13px;color:#6b6b6b;max-width:120px;overflow:hidden">eastus/algosec_Virtual</span><div class="b" style="left:63px;top:427px;width:6px;height:1px;background:repeating-linear-gradient(to right,transparent 0,transparent 1px,#333 1px,#333 2px)"></div><svg class="i" style="left:75px;top:420.5px" width="14" height="13" viewBox="0 0 14 13" ><path d="M3.4 9.6 A3 3 0 0 1 3 3.8 A4.2 4.2 0 0 1 11 3.4 A3.2 3.2 0 0 1 11 9.6 Z" fill="#2b8fe0"/><rect x="3.6" y="7" width="7" height="5" fill="#e03a3a"/><path d="M3.6 9.5 H10.6 M7 7 V9.5 M5.2 9.5 V12 M8.8 9.5 V12" stroke="#fff" stroke-width="0.5"/></svg><span class="t" style="left:93px;top:419px;font-size:12px;line-height:16px;letter-spacing:0.04px;color:#c4161c;max-width:102px;overflow:hidden">AzureFirewall_algosec</span><svg class="i" style="left:39px;top:440.8px" width="10.4" height="10.4" viewBox="0 0 10.4 10.4" ><rect x="0.5" y="0.5" width="9.4" height="9.4" rx="1.5" fill="#fff" stroke="#46627f"/><rect x="2.4" y="4.2" width="5.6" height="2" fill="#1f3a57"/></svg><div class="b" style="left:51px;top:445px;width:2px;height:1px;background:repeating-linear-gradient(to right,#333 0,#333 1px,transparent 1px,transparent 2px)"></div><svg class="i" style="left:57px;top:440.5px" width="14" height="9" viewBox="0 0 14 9" ><path d="M4 1.2 L0.9 4.5 L4 7.8" fill="none" stroke="#35c1f1" stroke-width="1.5" stroke-linecap="round" stroke-linejoin="round"/><path d="M10 1.2 L13.1 4.5 L10 7.8" fill="none" stroke="#35c1f1" stroke-width="1.5" stroke-linecap="round" stroke-linejoin="round"/><circle cx="4.6" cy="4.5" r="1.05" fill="#7fba42"/><circle cx="7" cy="4.5" r="1.05" fill="#7fba42"/><circle cx="9.4" cy="4.5" r="1.05" fill="#7fba42"/></svg><span class="t" style="left:75px;top:437px;font-size:12px;line-height:16px;letter-spacing:0.02px;color:#6b6b6b;max-width:120px;overflow:hidden">eastus/ASMS-Deployment</span><div class="b" style="left:63px;top:463px;width:6px;height:1px;background:repeating-linear-gradient(to right,transparent 0,transparent 1px,#333 1px,#333 2px)"></div><svg class="i" style="left:75px;top:456.5px" width="14" height="13" viewBox="0 0 14 13" ><path d="M5.2 0.6 H9 L5 12.4 H0.6 Z" fill="#1277c8"/><path d="M8 3.2 L13.4 12.4 H4.4 L9 10.6 L6.6 7.2 Z" fill="#2f9be8"/><path d="M5.2 0.6 H9 L10.2 4 L7 9 Z" fill="#0a5ea8" opacity="0.55"/></svg><span class="t" style="left:93px;top:455px;font-size:12px;line-height:16px;letter-spacing:-0.35px;color:#c4161c;max-width:102px;overflow:hidden">GA-Test-A33NSG</span><svg class="i" style="left:39px;top:476.8px" width="10.4" height="10.4" viewBox="0 0 10.4 10.4" ><rect x="0.5" y="0.5" width="9.4" height="9.4" rx="1.5" fill="#fff" stroke="#46627f"/><rect x="2.4" y="4.2" width="5.6" height="2" fill="#1f3a57"/></svg><div class="b" style="left:51px;top:481px;width:2px;height:1px;background:repeating-linear-gradient(to right,#333 0,#333 1px,transparent 1px,transparent 2px)"></div><svg class="i" style="left:57px;top:476.5px" width="14" height="9" viewBox="0 0 14 9" ><path d="M4 1.2 L0.9 4.5 L4 7.8" fill="none" stroke="#35c1f1" stroke-width="1.5" stroke-linecap="round" stroke-linejoin="round"/><path d="M10 1.2 L13.1 4.5 L10 7.8" fill="none" stroke="#35c1f1" stroke-width="1.5" stroke-linecap="round" stroke-linejoin="round"/><circle cx="4.6" cy="4.5" r="1.05" fill="#7fba42"/><circle cx="7" cy="4.5" r="1.05" fill="#7fba42"/><circle cx="9.4" cy="4.5" r="1.05" fill="#7fba42"/></svg><span class="t" style="left:75px;top:473px;font-size:12px;line-height:16px;letter-spacing:0.07px;color:#6b6b6b;max-width:120px;overflow:hidden">eastus/FFT-vnet</span><div class="b" style="left:63px;top:499px;width:6px;height:1px;background:repeating-linear-gradient(to right,transparent 0,transparent 1px,#333 1px,#333 2px)"></div><svg class="i" style="left:75px;top:492.5px" width="14" height="13" viewBox="0 0 14 13" ><path d="M5.2 0.6 H9 L5 12.4 H0.6 Z" fill="#1277c8"/><path d="M8 3.2 L13.4 12.4 H4.4 L9 10.6 L6.6 7.2 Z" fill="#2f9be8"/><path d="M5.2 0.6 H9 L10.2 4 L7 9 Z" fill="#0a5ea8" opacity="0.55"/></svg><span class="t" style="left:93px;top:491px;font-size:12px;line-height:16px;letter-spacing:-0.03px;color:#c4161c;max-width:102px;overflow:hidden">cfg-asms-nsg</span><div class="b" style="left:195px;top:0px;width:15px;height:507px;background:#fdfdfd"></div><svg class="i" style="left:198px;top:10px" width="9" height="5" viewBox="0 0 9 5" ><path d="M0 5 L4.5 0 L9 5 Z" fill="#8a8a8a"/></svg><svg class="i" style="left:198px;top:492px" width="9" height="5" viewBox="0 0 9 5" ><path d="M0 0 L4.5 5 L9 0 Z" fill="#8a8a8a"/></svg><div class="b" style="left:198.5px;top:171px;width:8.5px;height:54px;background:#8b8b8b;border-radius:4.5px"></div></div><nav class="b" style="left:0;top:700px;width:210px;height:180px;background:#f0f2f2"><a class="b" style="left:0;top:0px;width:210px;height:36px;background:#f0f2f2;border-bottom:1px solid #d6d6d6;border-top:1px solid #f6f7f7"><svg class="i" style="left:13.8px;top:10.6px" width="17" height="17" viewBox="0 0 16 16" ><path d="M1 8 L8 1.2 L15 8 M3 6.5 V14 H6.4 V9.6 A1.6 1.6 0 0 1 9.6 9.6 V14 H13 V6.5" fill="none" stroke="#6a6f80" stroke-width="1.1" stroke-linejoin="round" stroke-linecap="round"/></svg><span class="t" style="left:44.6px;top:11.8px;font-size:11px;line-height:14px;letter-spacing:-0.75px;color:#555;">HOME</span></a><a class="b" style="left:0;top:36px;width:210px;height:36px;background:#e0e0e0;border-bottom:1px solid #d6d6d6;border-top:1px solid #f6f7f7"><svg class="i" style="left:13.8px;top:10.6px" width="17" height="17" viewBox="0 0 16 16" ><path d="M2.2 1.5 Q8 0.6 13.8 1.5 V11.5 Q13.8 14 8 15 Q2.2 14 2.2 11.5 Z" fill="none" stroke="#6a6f80" stroke-width="1.1" stroke-linejoin="round"/><circle cx="8" cy="8" r="1" fill="#333"/></svg><span class="t" style="left:44.6px;top:11.8px;font-size:11px;line-height:14px;letter-spacing:-0.86px;color:#555;">DEVICES</span></a><a class="b" style="left:0;top:72px;width:210px;height:36px;background:#f0f2f2;border-bottom:1px solid #d6d6d6;border-top:1px solid #f6f7f7"><svg class="i" style="left:13.8px;top:10.6px" width="17" height="17" viewBox="0 0 16 16" ><circle cx="8" cy="8" r="7" fill="none" stroke="#6a6f80" stroke-width="1.1"/><path d="M8 1 V8 L2.4 12.2" fill="none" stroke="#6a6f80" stroke-width="1.1"/></svg><span class="t" style="left:44.6px;top:11.8px;font-size:11px;line-height:14px;letter-spacing:-0.75px;color:#555;">DASHBOARDS</span></a><a class="b" style="left:0;top:108px;width:210px;height:36px;background:#f0f2f2;border-bottom:1px solid #d6d6d6;border-top:1px solid #f6f7f7"><svg class="i" style="left:13.8px;top:10.6px" width="17" height="17" viewBox="0 0 16 16" ><path d="M4.4 3.6 Q9.2 2.9 14 3.6 V12 Q14 14 9.2 15 Q4.4 14 4.4 12 Z" fill="none" stroke="#6a6f80" stroke-width="1.1" stroke-linejoin="round"/><path d="M12 1.6 Q7 0.9 2 1.6 V10 Q2 11.6 4.4 12.6" fill="none" stroke="#6a6f80" stroke-width="1.1"/><circle cx="9.2" cy="9" r="1" fill="#333"/></svg><span class="t" style="left:44.6px;top:11.8px;font-size:11px;line-height:14px;letter-spacing:-0.9px;color:#555;">GROUPS</span></a><a class="b" style="left:0;top:144px;width:210px;height:36px;background:#f0f2f2;border-bottom:1px solid #d6d6d6;border-top:1px solid #f6f7f7"><svg class="i" style="left:13.8px;top:10.6px" width="17" height="17" viewBox="0 0 16 16" ><path d="M6.4 5 V2.6 H1.2 V7.6 Q1.2 8.9 4.6 9.8" fill="none" stroke="#6a6f80" stroke-width="1.05"/><path d="M9.6 5 V2.6 H14.8 V7.6 Q14.8 8.9 11.4 9.8" fill="none" stroke="#6a6f80" stroke-width="1.05"/><path d="M5 5.4 H11 V11 Q11 12.4 8 13.4 Q5 12.4 5 11 Z" fill="none" stroke="#6a6f80" stroke-width="1.05"/><circle cx="8" cy="9.4" r="0.9" fill="#223"/></svg><span class="t" style="left:44.6px;top:11.8px;font-size:11px;line-height:14px;letter-spacing:-0.75px;color:#555;">MATRICES</span></a></nav></aside>
<main><svg class="i" style="left:43px;top:30px" width="23" height="23" viewBox="0 0 23 23" ><linearGradient id="pk" x1="0.3" y1="0" x2="0.7" y2="1"><stop offset="0" stop-color="#f48cc0"/><stop offset="0.45" stop-color="#e8106c"/><stop offset="1" stop-color="#d4004f"/></linearGradient><circle cx="8.6" cy="13.3" r="8.5" fill="url(#pk)"/><path d="M12.8 2 H20 V11.2 H12.8 Z" fill="#fff"/><path d="M5.4 12.2 L9.9 16 L13.2 12" fill="none" stroke="#fff" stroke-width="1.1"/><circle cx="5.4" cy="12.2" r="1.4" fill="#fff"/><circle cx="9.9" cy="16" r="2" fill="#fff"/><circle cx="18.3" cy="4.4" r="3.2" fill="#000"/></svg><h2 class="t" style="left:74px;top:29.799999999999997px;font-size:20.2px;line-height:24px;letter-spacing:0.51px;color:#222;-webkit-text-stroke:0.5px #222;">Lambrusco</h2><a class="t" href="#" style="left:74px;top:64px;font-size:13px;line-height:17px;letter-spacing:0.23px;color:#41abe0;-webkit-text-stroke:0.35px #41abe0;">Latest Report</a><span class="t" style="left:164.3px;top:65px;font-size:12px;line-height:16px;letter-spacing:-0.28px;color:#808080;">Dec 21, 2024</span><div class="b" style="left:242px;top:64px;width:1px;height:17px;background:#dcdcdc"></div><span class="t" style="left:252.6px;top:65px;font-size:12px;line-height:16px;letter-spacing:-0.09px;color:#b5b5b5;">01:18:04</span><svg class="i" style="left:307.6px;top:65.4px" width="14" height="13" viewBox="0 0 14 13" ><path d="M7 0.6 L13.6 12 H0.4 Z" fill="#3fade0" stroke="#3fade0" stroke-linejoin="round" stroke-width="0.8"/><rect x="6.2" y="4" width="1.6" height="4.4" fill="#fff"/><rect x="6.2" y="9.3" width="1.6" height="1.6" fill="#fff"/></svg><span class="t" style="left:1415.8px;top:30.6px;font-size:12px;line-height:16px;letter-spacing:-0.2px;color:#808080;">Host:</span><span class="t" style="left:1446.6px;top:30.6px;font-size:12px;line-height:16px;letter-spacing:-0.13px;color:#333;">10.20.3.184</span><span class="t" style="left:1415.8px;top:47.6px;font-size:12px;line-height:16px;letter-spacing:-0.16px;color:#808080;">Device Version:</span><span class="t" style="left:1500.5px;top:47.6px;font-size:12px;line-height:16px;letter-spacing:-0.37px;color:#333;">R77.30</span><div class="b" style="left:1547px;top:30px;width:1px;height:34px;background:#dcdcdc"></div><span class="t" style="left:1558px;top:30.6px;font-size:12px;line-height:16px;letter-spacing:-0.05px;color:#808080;">Policy:</span><span class="t" style="left:1596.5px;top:30.6px;font-size:12px;line-height:16px;letter-spacing:-0.09px;color:#333;">Standard.W</span><div class="b" style="left:1315px;top:74px;width:90px;height:24px;border:1px solid #d9402c;border-radius:3px;background:#fdfdfd"></div><span class="t" style="left:1329px;top:79px;font-size:12px;line-height:16px;letter-spacing:0.04px;color:#333;">Analysis</span><div class="b" style="left:1381.6px;top:82.2px;width:8px;height:8px;border-radius:50%;background:#d9402c"></div><div class="b" style="left:1418px;top:74px;width:106px;height:24px;border:1px solid #b8b8b8;border-radius:3px;background:#fdfdfd"></div><span class="t" style="left:1433px;top:79px;font-size:12px;line-height:16px;letter-spacing:0.35px;color:#333;">Monitoring</span><div class="b" style="left:1500.6px;top:82.2px;width:8px;height:8px;border-radius:50%;background:#76c043"></div><div class="b" style="left:1537px;top:74px;width:122px;height:24px;border:1px solid #d9402c;border-radius:3px;background:#fdfdfd"></div><span class="t" style="left:1552px;top:79px;font-size:12px;line-height:16px;letter-spacing:0.12px;color:#333;">Log collection</span><div class="b" style="left:1635.5px;top:82.2px;width:8px;height:8px;border-radius:50%;background:#d9402c"></div><a class="t" href="#" style="left:52px;top:120px;font-size:12.6px;line-height:16px;letter-spacing:-0.84px;color:#555;">OVERVIEW</a><a class="t" href="#" style="left:154.3px;top:120px;font-size:12.6px;line-height:16px;letter-spacing:-0.54px;color:#333;-webkit-text-stroke:0.2px #333;">POLICY</a><a class="t" href="#" style="left:238px;top:120px;font-size:12.6px;line-height:16px;letter-spacing:-0.76px;color:#555;">CHANGES</a><a class="t" href="#" style="left:338px;top:120px;font-size:12.6px;line-height:16px;letter-spacing:-0.81px;color:#555;">REPORTS</a><a class="t" href="#" style="left:435px;top:120px;font-size:12.6px;line-height:16px;letter-spacing:-0.43px;color:#555;">MAP</a><div class="b" style="left:146px;top:146px;width:59px;height:5px;background:#b4b4b4"></div><div class="b" style="left:42px;top:151px;width:1617px;height:1px;background:#e4e4e4"></div><svg class="i" style="left:1432.4px;top:181.4px" width="13" height="13.6" viewBox="0 0 13 13.6" ><path d="M3 3.8 V1.9 A1 1 0 0 1 4 0.9 H9 L12.2 4.1 V12 A1 1 0 0 1 11.2 13 H4 A1 1 0 0 1 3 12 V11.7" fill="none" stroke="#222" stroke-width="1.15"/><path d="M8.8 1 V4.3 H12" fill="none" stroke="#222" stroke-width="1"/><rect x="0" y="5.1" width="10.6" height="6.2" fill="#fff"/><text x="0.2" y="10.75" font-family="Liberation Sans, sans-serif" font-size="6.7" font-weight="bold" fill="#000" stroke="#000" stroke-width="0.25" textLength="9.7" lengthAdjust="spacingAndGlyphs" text-rendering="geometricPrecision">PDF</text></svg><a class="t" href="#" style="left:1454px;top:180.3px;font-size:13px;line-height:17px;letter-spacing:-0.71px;color:#222;">Export To PDF</a><div class="b" style="left:1545px;top:181px;width:1px;height:14px;background:#dcdcdc"></div><svg class="i" style="left:1563px;top:181.4px" width="13" height="13.6" viewBox="0 0 13 13.6" ><path d="M3 3.8 V1.9 A1 1 0 0 1 4 0.9 H9 L12.2 4.1 V12 A1 1 0 0 1 11.2 13 H4 A1 1 0 0 1 3 12 V11.7" fill="none" stroke="#222" stroke-width="1.15"/><path d="M8.8 1 V4.3 H12" fill="none" stroke="#222" stroke-width="1"/><rect x="0" y="5.1" width="10.6" height="6.2" fill="#fff"/><text x="0.2" y="10.75" font-family="Liberation Sans, sans-serif" font-size="6.7" font-weight="bold" fill="#000" stroke="#000" stroke-width="0.25" textLength="9.7" lengthAdjust="spacingAndGlyphs" text-rendering="geometricPrecision">CSV</text></svg><a class="t" href="#" style="left:1584.8px;top:180.3px;font-size:13px;line-height:17px;letter-spacing:-0.81px;color:#222;">Export To CSV</a><div class="b" style="left:42px;top:204px;width:1617px;height:146px;border:1px solid #e2e2e2;border-radius:8px;background:#fff"></div><div class="b" style="left:59px;top:224.8px;width:13.4px;height:13.4px;border:1px solid #767676;border-radius:50%;background:#fff"></div><div class="b" style="left:62.2px;top:228px;width:7px;height:7px;border-radius:50%;background:#767676"></div><label class="t" style="left:78.3px;top:221.8px;font-size:13px;line-height:17px;letter-spacing:-0.26px;color:#555;">Basic Search</label><div class="b" style="left:175.6px;top:224.8px;width:13.4px;height:13.4px;border:1px solid #767676;border-radius:50%;background:#fff"></div><label class="t" style="left:194.6px;top:221.8px;font-size:13px;line-height:17px;letter-spacing:-0.17px;color:#555;">Advanced Search</label><div class="b" style="left:59px;top:257px;width:170px;height:28px;border:1px solid #adadad;background:#fff"></div><span class="t" style="left:69.7px;top:262.8px;font-size:13px;line-height:17px;letter-spacing:0.03px;color:#444;">All Fields</span><svg class="i" style="left:215px;top:268.2px" width="9.4" height="6.4" viewBox="0 0 9.4 6.4" ><path d="M0.8 0.8 L4.7 5.4 L8.6 0.8" fill="none" stroke="#333" stroke-width="1.7"/></svg><label class="t" style="left:241.8px;top:262.8px;font-size:13px;line-height:17px;letter-spacing:0.09px;color:#444;">Contains</label><div class="b" style="left:306px;top:257px;width:200px;height:28px;border:1px solid #b9b9b9;background:#fff"></div><div class="b" style="left:519px;top:261px;width:24px;height:24px;border-radius:50%;background:#e9e9f7"></div><svg class="i" style="left:525.2px;top:267.2px" width="11.6" height="11.6" viewBox="0 0 11.6 11.6" ><path d="M5.8 0 V11.6 M0 5.8 H11.6" stroke="#333" stroke-width="1.4"/></svg><div class="b" style="left:59px;top:301px;width:90px;height:32px;border-radius:3px;background:#45ade2"></div><span class="t" style="left:73px;top:308.6px;font-size:13px;line-height:17px;letter-spacing:-0.34px;color:#fff;font-weight:bold;">Find Rules</span><svg class="i" style="left:175.8px;top:312px" width="10.2" height="10.2" viewBox="0 0 10.2 10.2" ><path d="M0.4 0.4 L9.799999999999999 9.799999999999999 M9.799999999999999 0.4 L0.4 9.799999999999999" stroke="#222" stroke-width="1.3"/></svg><a class="t" href="#" style="left:195.3px;top:308.6px;font-size:13px;line-height:17px;letter-spacing:-0.24px;color:#222;">Clear Search</a><svg class="i" style="left:1558px;top:223.3px" width="14" height="14" viewBox="0 0 14 14" ><circle cx="7" cy="7" r="6" fill="none" stroke="#333" stroke-width="1.2"/><rect x="6.4" y="6" width="1.2" height="4.2" fill="#333"/><rect x="6.4" y="3.8" width="1.2" height="1.3" fill="#333"/></svg><a class="t" href="#" style="left:1579.6px;top:221.3px;font-size:13px;line-height:17px;letter-spacing:-0.51px;color:#333;">Search Tips</a><div class="b" style="left:1444px;top:265px;width:13px;height:13px;border:1px solid #767676;border-radius:2.5px;background:#fff"></div><label class="t" style="left:1464.7px;top:262.2px;font-size:13px;line-height:17px;letter-spacing:0.08px;color:#555;">Include 'Any'</label><div class="b" style="left:1552px;top:265px;width:13px;height:13px;border:1px solid #767676;border-radius:2.5px;background:#fff"></div><label class="t" style="left:1572.5px;top:262.2px;font-size:13px;line-height:17px;letter-spacing:-0.18px;color:#555;">Exact Match</label><svg class="i" style="left:44.4px;top:370.6px" width="11.4" height="11.4" viewBox="0 0 11.4 11.4" ><path d="M5.7 0 V11.4 M0 5.7 H11.4" stroke="#b4b4b4" stroke-width="1.2"/></svg><a class="t" href="#" style="left:63.8px;top:367.7px;font-size:13px;line-height:17px;letter-spacing:0.2px;color:#b4b4b4;">Add Documentation</a><div class="b" style="left:197.4px;top:369px;width:1.8px;height:14px;background:#dedede"></div><svg class="i" style="left:218px;top:371px" width="10" height="10" viewBox="0 0 10 10" ><path d="M0.4 0.4 L9.6 9.6 M9.6 0.4 L0.4 9.6" stroke="#b4b4b4" stroke-width="1.2"/></svg><a class="t" href="#" style="left:236.5px;top:367.7px;font-size:13px;line-height:17px;letter-spacing:0.13px;color:#b4b4b4;">Clear Documentation</a><div class="b" style="left:376.4px;top:369px;width:1.8px;height:14px;background:#dedede"></div><svg class="i" style="left:395px;top:369.2px" width="14" height="14" viewBox="0 0 14 14" ><path d="M3.4 2.4 A5.8 5.8 0 0 1 12.6 8.6 M10.6 11.6 A5.8 5.8 0 0 1 1.4 5.4" fill="none" stroke="#b4b4b4" stroke-width="1.2"/><path d="M1.6 1.6 L12.4 12.4" stroke="#b4b4b4" stroke-width="1.2"/></svg><a class="t" href="#" style="left:414.6px;top:367.7px;font-size:13px;line-height:17px;letter-spacing:-0.14px;color:#b4b4b4;">Disable Rule</a><div class="b" style="left:502.4px;top:369px;width:1.8px;height:14px;background:#dedede"></div><svg class="i" style="left:522px;top:369px" width="12" height="14" viewBox="0 0 12 14" ><path d="M0 3 H12 M4.2 3 V1.2 H7.8 V3 M1.8 3 V12 A1.2 1.2 0 0 0 3 13.2 H9 A1.2 1.2 0 0 0 10.2 12 V3" fill="none" stroke="#b4b4b4" stroke-width="1.2"/></svg><a class="t" href="#" style="left:540.5px;top:367.7px;font-size:13px;line-height:17px;letter-spacing:-0.25px;color:#b4b4b4;">Remove Rule</a><div class="b" style="left:632.4px;top:369px;width:1.8px;height:14px;background:#dedede"></div><svg class="i" style="left:651px;top:370px" width="14" height="13" viewBox="0 0 14 13" ><circle cx="2.4" cy="10.8" r="1.5" fill="none" stroke="#222" stroke-width="1.2"/><path d="M3.9 10.8 H5.4 A1.8 1.8 0 0 0 7.2 9 V5.2 A1.8 1.8 0 0 1 9 3.4 H12.6 M10.6 1 L13 3.4 L10.6 5.8" fill="none" stroke="#222" stroke-width="1.3"/></svg><a class="t" href="#" style="left:672px;top:367.7px;font-size:13px;line-height:17px;letter-spacing:-0.08px;color:#222;">Generate Appviz Flow</a><div class="b" style="left:64px;top:392px;width:1586px;height:376px;overflow:hidden"><table style="width:1646px;border-collapse:separate;border-spacing:0;border-left:1px solid #7d7d7d;font-size:12px"><colgroup><col style="width:33px"><col style="width:60px"><col style="width:94px"><col style="width:134px"><col style="width:94px"><col style="width:134px"><col style="width:94px"><col style="width:94px"><col style="width:134px"><col style="width:134px"><col style="width:134px"><col style="width:144px"><col style="width:134px"><col style="width:134px"><col style="width:94px"></colgroup><thead><tr><th style="border:0;border-right:1px solid #8d8878;border-bottom:1px solid #7d7d7d;height:26px;background:#506288"><div style="position:relative;height:25px;overflow:hidden"><div class="b" style="left:6.6px;top:4.4px;width:12.6px;height:12.6px;background:#fff;border:1px solid #8d8d8d;border-radius:2.5px"></div></div></th><th style="border:0;border-right:1px solid #8d8878;border-bottom:1px solid #7d7d7d;height:26px;background:#506288"><div style="position:relative;height:25px;overflow:hidden"></div></th><th style="border:0;border-right:1px solid #8d8878;border-bottom:1px solid #7d7d7d;height:26px;background:#506288"><div style="position:relative;height:25px;overflow:hidden"><span class="t" style="left:5px;top:2.9000000000000004px;font-size:12px;line-height:16px;letter-spacing:0.07px;color:#fff;font-weight:bold;">No.</span></div></th><th style="border:0;border-right:1px solid #8d8878;border-bottom:1px solid #7d7d7d;height:26px;background:#506288"><div style="position:relative;height:25px;overflow:hidden"><span class="t" style="left:5px;top:2.9000000000000004px;font-size:12px;line-height:16px;letter-spacing:0.24px;color:#fff;font-weight:bold;">Name</span></div></th><th style="border:0;border-right:1px solid #8d8878;border-bottom:1px solid #7d7d7d;height:26px;background:#506288"><div style="position:relative;height:25px;overflow:hidden"><span class="t" style="left:5px;top:2.9000000000000004px;font-size:12px;line-height:16px;letter-spacing:-0.06px;color:#fff;font-weight:bold;">Layer Type</span></div></th><th style="border:0;border-right:1px solid #8d8878;border-bottom:1px solid #7d7d7d;height:26px;background:#506288"><div style="position:relative;height:25px;overflow:hidden"><span class="t" style="left:5px;top:2.9000000000000004px;font-size:12px;line-height:16px;letter-spacing:-0.04px;color:#fff;font-weight:bold;">Layer Name</span></div></th><th style="border:0;border-right:1px solid #8d8878;border-bottom:1px solid #7d7d7d;height:26px;background:#506288"><div style="position:relative;height:25px;overflow:hidden"><span class="t" style="left:5px;top:2.9000000000000004px;font-size:12px;line-height:16px;letter-spacing:-0.05px;color:#fff;font-weight:bold;">Global</span></div></th><th style="border:0;border-right:1px solid #8d8878;border-bottom:1px solid #7d7d7d;height:26px;background:#506288"><div style="position:relative;height:25px;overflow:hidden"><span class="t" style="left:5px;top:2.9000000000000004px;font-size:12px;line-height:16px;letter-spacing:-0.05px;color:#fff;font-weight:bold;">Status</span></div></th><th style="border:0;border-right:1px solid #8d8878;border-bottom:1px solid #7d7d7d;height:26px;background:#506288"><div style="position:relative;height:25px;overflow:hidden"><span class="t" style="left:5px;top:2.9000000000000004px;font-size:12px;line-height:16px;letter-spacing:-0.17px;color:#fff;font-weight:bold;">Source</span></div></th><th style="border:0;border-right:1px solid #8d8878;border-bottom:1px solid #7d7d7d;height:26px;background:#506288"><div style="position:relative;height:25px;overflow:hidden"><span class="t" style="left:5px;top:2.9000000000000004px;font-size:12px;line-height:16px;letter-spacing:0.04px;color:#fff;font-weight:bold;">Destination</span></div></th><th style="border:0;border-right:1px solid #8d8878;border-bottom:1px solid #7d7d7d;height:26px;background:#506288"><div style="position:relative;height:25px;overflow:hidden"><span class="t" style="left:5px;top:2.9000000000000004px;font-size:12px;line-height:16px;letter-spacing:-0.4px;color:#fff;font-weight:bold;">VPN</span></div></th><th style="border:0;border-right:1px solid #8d8878;border-bottom:1px solid #7d7d7d;height:26px;background:#506288"><div style="position:relative;height:25px;overflow:hidden"><span class="t" style="left:5px;top:2.9000000000000004px;font-size:12px;line-height:16px;letter-spacing:-0.21px;color:#fff;font-weight:bold;">Services &amp; Applications</span></div></th><th style="border:0;border-right:1px solid #8d8878;border-bottom:1px solid #7d7d7d;height:26px;background:#506288"><div style="position:relative;height:25px;overflow:hidden"><span class="t" style="left:5px;top:2.9000000000000004px;font-size:12px;line-height:16px;letter-spacing:0.08px;color:#fff;font-weight:bold;">Content</span></div></th><th style="border:0;border-right:1px solid #8d8878;border-bottom:1px solid #7d7d7d;height:26px;background:#506288"><div style="position:relative;height:25px;overflow:hidden"><span class="t" style="left:5px;top:2.9000000000000004px;font-size:12px;line-height:16px;letter-spacing:-0.17px;color:#fff;font-weight:bold;">Action</span></div></th><th style="border:0;border-right:1px solid #8d8878;border-bottom:1px solid #7d7d7d;height:26px;background:#506288"><div style="position:relative;height:25px;overflow:hidden"><span class="t" style="left:5px;top:2.9000000000000004px;font-size:12px;line-height:16px;letter-spacing:0.08px;color:#fff;font-weight:bold;">Track</span></div></th></tr></thead><tbody><tr><td colspan="15" style="border:0;border-bottom:1px solid #7d7d7d;border-right:1px solid #7d7d7d;height:30px;background:#88cbf0"><div style="position:relative;height:29px"><span class="t" style="left:5.2px;top:6.5px;font-size:12px;line-height:16px;letter-spacing:-0.04px;color:#444;font-weight:bold;">Network - Domain (Ordered Layer # 1)</span></div></td></tr><tr><td colspan="15" style="border:0;border-bottom:1px solid #7d7d7d;border-right:1px solid #7d7d7d;height:30px;background:#fff9b0"><div style="position:relative;height:29px"><span class="t" style="left:5.2px;top:6.600000000000001px;font-size:12px;line-height:16px;letter-spacing:-0.18px;color:#444;font-weight:bold;">QA pc (1-3)</span></div></td></tr><tr><td style="border:0;border-right:1px solid #7d7d7d;border-bottom:1px solid #7d7d7d;height:24px;"><div style="position:relative;height:23px;overflow:hidden"><div class="b" style="left:8.8px;top:4.8px;width:13.4px;height:13.4px;border:1px solid #767676;border-radius:2.5px;background:#fff"></div></div></td><td style="border:0;border-right:1px solid #7d7d7d;border-bottom:1px solid #7d7d7d;height:24px;"><div style="position:relative;height:23px;overflow:hidden"><svg class="i" style="left:23px;top:3.0px" width="18" height="18" viewBox="0 0 18 18" ><path d="M5 14.5 H2.5 Q1.5 14.5 1.5 13.5 V2.5 Q1.5 1.5 2.5 1.5 H6.5 L9.5 4.5 V7.6" fill="none" stroke="#625ac2" stroke-width="1"/><path d="M6.5 1.5 V4.5 H9.5" fill="none" stroke="#625ac2" stroke-width="1"/><g transform="translate(5.5,16.6) rotate(-44)"><path d="M0 0 L2.6 -2.1 H11.8 V2.1 H2.6 Z" fill="#3d5db5"/><rect x="12.5" y="-2.1" width="2.7" height="4.2" fill="#3d5db5"/><path d="M0.6 0 L2.3 -1.3 V1.3 Z" fill="#fff"/><path d="M3.4 0 H11.2" stroke="#dfe6f7" stroke-width="0.7" stroke-dasharray="1 0.8"/></g></svg></div></td><td style="border:0;border-right:1px solid #7d7d7d;border-bottom:1px solid #7d7d7d;height:24px;"><div style="position:relative;height:23px;overflow:hidden"><span class="t" style="left:3.4px;top:3.9000000000000004px;font-size:12px;line-height:16px;letter-spacing:-0.21px;color:#111;">1</span></div></td><td style="border:0;border-right:1px solid #7d7d7d;border-bottom:1px solid #7d7d7d;height:24px;"><div style="position:relative;height:23px;overflow:hidden"><span class="t" style="left:2.8px;top:3.9000000000000004px;font-size:12px;line-height:16px;letter-spacing:-0.11px;color:#111;">QA Env. to Nachos</span></div></td><td style="border:0;border-right:1px solid #7d7d7d;border-bottom:1px solid #7d7d7d;height:24px;"><div style="position:relative;height:23px;overflow:hidden"><span class="t" style="left:2.8px;top:3.9000000000000004px;font-size:12px;line-height:16px;letter-spacing:0.14px;color:#111;">Ordered</span></div></td><td style="border:0;border-right:1px solid #7d7d7d;border-bottom:1px solid #7d7d7d;height:24px;"><div style="position:relative;height:23px;overflow:hidden"><span class="t" style="left:2.8px;top:3.9000000000000004px;font-size:12px;line-height:16px;letter-spacing:0.37px;color:#111;">Network</span></div></td><td style="border:0;border-right:1px solid #7d7d7d;border-bottom:1px solid #7d7d7d;height:24px;"><div style="position:relative;height:23px;overflow:hidden"><span class="t" style="left:2.8px;top:3.9000000000000004px;font-size:12px;line-height:16px;letter-spacing:0.22px;color:#111;">Domain</span></div></td><td style="border:0;border-right:1px solid #7d7d7d;border-bottom:1px solid #7d7d7d;height:24px;"><div style="position:relative;height:23px;overflow:hidden"><span class="t" style="left:2.8px;top:3.9000000000000004px;font-size:12px;line-height:16px;letter-spacing:0.09px;color:#111;">Enabled</span></div></td><td style="border:0;border-right:1px solid #7d7d7d;border-bottom:1px solid #7d7d7d;height:24px;"><div style="position:relative;height:23px;overflow:hidden"><svg class="i" style="left:11.7px;top:7.1px" width="10" height="9.4" viewBox="0 0 10 9.4" ><g fill="#4a4a4a"><rect x="2.8" y="0" width="4.2" height="2.1" rx="0.4"/><rect x="0" y="6.4" width="3.7" height="2.8" rx="0.4"/><rect x="6.1" y="6.4" width="3.7" height="2.8" rx="0.4"/></g><path d="M4.9 2.1 V4.4 M1.8 6.4 V4.4 H8 V6.4" fill="none" stroke="#4a4a4a" stroke-width="0.9"/></svg><span class="t" style="left:25.6px;top:3.9000000000000004px;font-size:12px;line-height:16px;letter-spacing:-0.14px;color:#111;">n10_20_0_0</span></div></td><td style="border:0;border-right:1px solid #7d7d7d;border-bottom:1px solid #7d7d7d;height:24px;"><div style="position:relative;height:23px;overflow:hidden"><svg class="i" style="left:11.5px;top:7.1px" width="9" height="9" viewBox="0 0 9 9" ><g stroke="#7c7c7c" stroke-width="1.5"><path d="M0.40 4.50 L8.60 4.50"/><path d="M2.45 0.95 L6.55 8.05"/><path d="M6.55 0.95 L2.45 8.05"/></g></svg><span class="t" style="left:25.6px;top:3.9000000000000004px;font-size:12px;line-height:16px;letter-spacing:-0.14px;color:#111;">Any</span></div></td><td style="border:0;border-right:1px solid #7d7d7d;border-bottom:1px solid #7d7d7d;height:24px;"><div style="position:relative;height:23px;overflow:hidden"><svg class="i" style="left:11.5px;top:7.1px" width="9" height="9" viewBox="0 0 9 9" ><g stroke="#7c7c7c" stroke-width="1.5"><path d="M0.40 4.50 L8.60 4.50"/><path d="M2.45 0.95 L6.55 8.05"/><path d="M6.55 0.95 L2.45 8.05"/></g></svg><span class="t" style="left:25.6px;top:3.9000000000000004px;font-size:12px;line-height:16px;letter-spacing:-0.14px;color:#111;">Any</span></div></td><td style="border:0;border-right:1px solid #7d7d7d;border-bottom:1px solid #7d7d7d;height:24px;"><div style="position:relative;height:23px;overflow:hidden"><svg class="i" style="left:11.5px;top:7.1px" width="9" height="9" viewBox="0 0 9 9" ><g stroke="#7c7c7c" stroke-width="1.5"><path d="M0.40 4.50 L8.60 4.50"/><path d="M2.45 0.95 L6.55 8.05"/><path d="M6.55 0.95 L2.45 8.05"/></g></svg><span class="t" style="left:25.6px;top:3.9000000000000004px;font-size:12px;line-height:16px;letter-spacing:-0.14px;color:#111;">Any</span></div></td><td style="border:0;border-right:1px solid #7d7d7d;border-bottom:1px solid #7d7d7d;height:24px;"><div style="position:relative;height:23px;overflow:hidden"><svg class="i" style="left:11.5px;top:7.1px" width="9" height="9" viewBox="0 0 9 9" ><g stroke="#7c7c7c" stroke-width="1.5"><path d="M0.40 4.50 L8.60 4.50"/><path d="M2.45 0.95 L6.55 8.05"/><path d="M6.55 0.95 L2.45 8.05"/></g></svg><span class="t" style="left:25.6px;top:3.9000000000000004px;font-size:12px;line-height:16px;letter-spacing:-0.14px;color:#111;">Any</span></div></td><td style="border:0;border-right:1px solid #7d7d7d;border-bottom:1px solid #7d7d7d;height:24px;"><div style="position:relative;height:23px;overflow:hidden"><svg class="i" style="left:9px;top:4.0px" width="14" height="14" viewBox="0 0 14 14" ><circle cx="7" cy="7" r="7" fill="#55b313"/><g fill="#fff"><rect x="1.8" y="7" width="10.4" height="1.7"/><rect x="3.3" y="8.6" width="1.5" height="2.6"/><rect x="9.2" y="8.6" width="1.5" height="2.6"/><path d="M4.6 2.4 H6.3 V6.2 H3.2 Z"/><path d="M7.7 2.4 H9.4 L10.8 6.2 H7.7 Z"/></g></svg><span class="t" style="left:25.6px;top:3.9000000000000004px;font-size:12px;line-height:16px;letter-spacing:0.05px;color:#111;">Accept</span></div></td><td style="border:0;border-right:1px solid #7d7d7d;border-bottom:1px solid #7d7d7d;height:24px;"><div style="position:relative;height:23px;overflow:hidden"><svg class="i" style="left:10px;top:3.0px" width="11" height="13.8" viewBox="0 0 11 13.8" ><rect x="0.6" y="1.9" width="9.8" height="11.2" rx="0.9" fill="#fff" stroke="#1f3354" stroke-width="1.2"/><path d="M1.6 2.9 V1.2 H4.2 V0.2 H6.8 V1.2 H9.4 V2.9 Z" fill="#1f3354"/><path d="M2.7 6.5 H8.3 M2.7 8.5 H8.3 M2.7 10.5 H8.3" stroke="#1f3354" stroke-width="1"/></svg><span class="t" style="left:25.6px;top:3.9000000000000004px;font-size:12px;line-height:16px;letter-spacing:-0.04px;color:#111;">Log</span></div></td></tr><tr><td style="border:0;border-right:1px solid #7d7d7d;border-bottom:1px solid #7d7d7d;height:24px;"><div style="position:relative;height:23px;overflow:hidden"><div class="b" style="left:8.8px;top:4.8px;width:13.4px;height:13.4px;border:1px solid #767676;border-radius:2.5px;background:#fff"></div></div></td><td style="border:0;border-right:1px solid #7d7d7d;border-bottom:1px solid #7d7d7d;height:24px;"><div style="position:relative;height:23px;overflow:hidden"><svg class="i" style="left:23px;top:3.0px" width="18" height="18" viewBox="0 0 18 18" ><path d="M5 14.5 H2.5 Q1.5 14.5 1.5 13.5 V2.5 Q1.5 1.5 2.5 1.5 H6.5 L9.5 4.5 V7.6" fill="none" stroke="#625ac2" stroke-width="1"/><path d="M6.5 1.5 V4.5 H9.5" fill="none" stroke="#625ac2" stroke-width="1"/><g transform="translate(5.5,16.6) rotate(-44)"><path d="M0 0 L2.6 -2.1 H11.8 V2.1 H2.6 Z" fill="#3d5db5"/><rect x="12.5" y="-2.1" width="2.7" height="4.2" fill="#3d5db5"/><path d="M0.6 0 L2.3 -1.3 V1.3 Z" fill="#fff"/><path d="M3.4 0 H11.2" stroke="#dfe6f7" stroke-width="0.7" stroke-dasharray="1 0.8"/></g></svg></div></td><td style="border:0;border-right:1px solid #7d7d7d;border-bottom:1px solid #7d7d7d;height:24px;"><div style="position:relative;height:23px;overflow:hidden"><span class="t" style="left:3.4px;top:3.9000000000000004px;font-size:12px;line-height:16px;letter-spacing:-0.21px;color:#111;">2</span></div></td><td style="border:0;border-right:1px solid #7d7d7d;border-bottom:1px solid #7d7d7d;height:24px;"><div style="position:relative;height:23px;overflow:hidden"><span class="t" style="left:2.8px;top:3.9000000000000004px;font-size:12px;line-height:16px;letter-spacing:-0.89px;color:#111;">AWS</span></div></td><td style="border:0;border-right:1px solid #7d7d7d;border-bottom:1px solid #7d7d7d;height:24px;"><div style="position:relative;height:23px;overflow:hidden"><span class="t" style="left:2.8px;top:3.9000000000000004px;font-size:12px;line-height:16px;letter-spacing:0.14px;color:#111;">Ordered</span></div></td><td style="border:0;border-right:1px solid #7d7d7d;border-bottom:1px solid #7d7d7d;height:24px;"><div style="position:relative;height:23px;overflow:hidden"><span class="t" style="left:2.8px;top:3.9000000000000004px;font-size:12px;line-height:16px;letter-spacing:0.37px;color:#111;">Network</span></div></td><td style="border:0;border-right:1px solid #7d7d7d;border-bottom:1px solid #7d7d7d;height:24px;"><div style="position:relative;height:23px;overflow:hidden"><span class="t" style="left:2.8px;top:3.9000000000000004px;font-size:12px;line-height:16px;letter-spacing:0.22px;color:#111;">Domain</span></div></td><td style="border:0;border-right:1px solid #7d7d7d;border-bottom:1px solid #7d7d7d;height:24px;"><div style="position:relative;height:23px;overflow:hidden"><span class="t" style="left:2.8px;top:3.9000000000000004px;font-size:12px;line-height:16px;letter-spacing:0.09px;color:#111;">Enabled</span></div></td><td style="border:0;border-right:1px solid #7d7d7d;border-bottom:1px solid #7d7d7d;height:24px;"><div style="position:relative;height:23px;overflow:hidden"><svg class="i" style="left:11.7px;top:7.1px" width="10" height="9.4" viewBox="0 0 10 9.4" ><g fill="#4a4a4a"><rect x="2.8" y="0" width="4.2" height="2.1" rx="0.4"/><rect x="0" y="6.4" width="3.7" height="2.8" rx="0.4"/><rect x="6.1" y="6.4" width="3.7" height="2.8" rx="0.4"/></g><path d="M4.9 2.1 V4.4 M1.8 6.4 V4.4 H8 V6.4" fill="none" stroke="#4a4a4a" stroke-width="0.9"/></svg><span class="t" style="left:25.6px;top:3.9000000000000004px;font-size:12px;line-height:16px;letter-spacing:-0.31px;color:#111;">AWS-10.154.0.0</span></div></td><td style="border:0;border-right:1px solid #7d7d7d;border-bottom:1px solid #7d7d7d;height:24px;"><div style="position:relative;height:23px;overflow:hidden"><svg class="i" style="left:11.5px;top:7.1px" width="9" height="9" viewBox="0 0 9 9" ><g stroke="#7c7c7c" stroke-width="1.5"><path d="M0.40 4.50 L8.60 4.50"/><path d="M2.45 0.95 L6.55 8.05"/><path d="M6.55 0.95 L2.45 8.05"/></g></svg><span class="t" style="left:25.6px;top:3.9000000000000004px;font-size:12px;line-height:16px;letter-spacing:-0.14px;color:#111;">Any</span></div></td><td style="border:0;border-right:1px solid #7d7d7d;border-bottom:1px solid #7d7d7d;height:24px;"><div style="position:relative;height:23px;overflow:hidden"><svg class="i" style="left:11.5px;top:7.1px" width="9" height="9" viewBox="0 0 9 9" ><g stroke="#7c7c7c" stroke-width="1.5"><path d="M0.40 4.50 L8.60 4.50"/><path d="M2.45 0.95 L6.55 8.05"/><path d="M6.55 0.95 L2.45 8.05"/></g></svg><span class="t" style="left:25.6px;top:3.9000000000000004px;font-size:12px;line-height:16px;letter-spacing:-0.14px;color:#111;">Any</span></div></td><td style="border:0;border-right:1px solid #7d7d7d;border-bottom:1px solid #7d7d7d;height:24px;"><div style="position:relative;height:23px;overflow:hidden"><svg class="i" style="left:11.5px;top:7.1px" width="9" height="9" viewBox="0 0 9 9" ><g stroke="#7c7c7c" stroke-width="1.5"><path d="M0.40 4.50 L8.60 4.50"/><path d="M2.45 0.95 L6.55 8.05"/><path d="M6.55 0.95 L2.45 8.05"/></g></svg><span class="t" style="left:25.6px;top:3.9000000000000004px;font-size:12px;line-height:16px;letter-spacing:-0.14px;color:#111;">Any</span></div></td><td style="border:0;border-right:1px solid #7d7d7d;border-bottom:1px solid #7d7d7d;height:24px;"><div style="position:relative;height:23px;overflow:hidden"><svg class="i" style="left:11.5px;top:7.1px" width="9" height="9" viewBox="0 0 9 9" ><g stroke="#7c7c7c" stroke-width="1.5"><path d="M0.40 4.50 L8.60 4.50"/><path d="M2.45 0.95 L6.55 8.05"/><path d="M6.55 0.95 L2.45 8.05"/></g></svg><span class="t" style="left:25.6px;top:3.9000000000000004px;font-size:12px;line-height:16px;letter-spacing:-0.14px;color:#111;">Any</span></div></td><td style="border:0;border-right:1px solid #7d7d7d;border-bottom:1px solid #7d7d7d;height:24px;"><div style="position:relative;height:23px;overflow:hidden"><svg class="i" style="left:9px;top:4.0px" width="14" height="14" viewBox="0 0 14 14" ><circle cx="7" cy="7" r="7" fill="#55b313"/><g fill="#fff"><rect x="1.8" y="7" width="10.4" height="1.7"/><rect x="3.3" y="8.6" width="1.5" height="2.6"/><rect x="9.2" y="8.6" width="1.5" height="2.6"/><path d="M4.6 2.4 H6.3 V6.2 H3.2 Z"/><path d="M7.7 2.4 H9.4 L10.8 6.2 H7.7 Z"/></g></svg><span class="t" style="left:25.6px;top:3.9000000000000004px;font-size:12px;line-height:16px;letter-spacing:0.05px;color:#111;">Accept</span></div></td><td style="border:0;border-right:1px solid #7d7d7d;border-bottom:1px solid #7d7d7d;height:24px;"><div style="position:relative;height:23px;overflow:hidden"><svg class="i" style="left:10px;top:3.0px" width="11" height="13.8" viewBox="0 0 11 13.8" ><rect x="0.6" y="1.9" width="9.8" height="11.2" rx="0.9" fill="#fff" stroke="#1f3354" stroke-width="1.2"/><path d="M1.6 2.9 V1.2 H4.2 V0.2 H6.8 V1.2 H9.4 V2.9 Z" fill="#1f3354"/><path d="M2.7 6.5 H8.3 M2.7 8.5 H8.3 M2.7 10.5 H8.3" stroke="#1f3354" stroke-width="1"/></svg><span class="t" style="left:25.6px;top:3.9000000000000004px;font-size:12px;line-height:16px;letter-spacing:-0.04px;color:#111;">Log</span></div></td></tr><tr><td style="border:0;border-right:1px solid #7d7d7d;border-bottom:1px solid #7d7d7d;height:44px;"><div style="position:relative;height:43px;overflow:hidden"><div class="b" style="left:8.8px;top:14.8px;width:13.4px;height:13.4px;border:1px solid #767676;border-radius:2.5px;background:#fff"></div></div></td><td style="border:0;border-right:1px solid #7d7d7d;border-bottom:1px solid #7d7d7d;height:44px;"><div style="position:relative;height:43px;overflow:hidden"><svg class="i" style="left:23px;top:13.0px" width="18" height="18" viewBox="0 0 18 18" ><path d="M5 14.5 H2.5 Q1.5 14.5 1.5 13.5 V2.5 Q1.5 1.5 2.5 1.5 H6.5 L9.5 4.5 V7.6" fill="none" stroke="#625ac2" stroke-width="1"/><path d="M6.5 1.5 V4.5 H9.5" fill="none" stroke="#625ac2" stroke-width="1"/><g transform="translate(5.5,16.6) rotate(-44)"><path d="M0 0 L2.6 -2.1 H11.8 V2.1 H2.6 Z" fill="#3d5db5"/><rect x="12.5" y="-2.1" width="2.7" height="4.2" fill="#3d5db5"/><path d="M0.6 0 L2.3 -1.3 V1.3 Z" fill="#fff"/><path d="M3.4 0 H11.2" stroke="#dfe6f7" stroke-width="0.7" stroke-dasharray="1 0.8"/></g></svg></div></td><td style="border:0;border-right:1px solid #7d7d7d;border-bottom:1px solid #7d7d7d;height:44px;"><div style="position:relative;height:43px;overflow:hidden"><span class="t" style="left:3.4px;top:13.899999999999999px;font-size:12px;line-height:16px;letter-spacing:-0.21px;color:#111;">3</span></div></td><td style="border:0;border-right:1px solid #7d7d7d;border-bottom:1px solid #7d7d7d;height:44px;"><div style="position:relative;height:43px;overflow:hidden"><span class="t" style="left:2.8px;top:13.899999999999999px;font-size:12px;line-height:16px;letter-spacing:0.08px;color:#111;">Don't Remove!</span></div></td><td style="border:0;border-right:1px solid #7d7d7d;border-bottom:1px solid #7d7d7d;height:44px;"><div style="position:relative;height:43px;overflow:hidden"><span class="t" style="left:2.8px;top:13.899999999999999px;font-size:12px;line-height:16px;letter-spacing:0.14px;color:#111;">Ordered</span></div></td><td style="border:0;border-right:1px solid #7d7d7d;border-bottom:1px solid #7d7d7d;height:44px;"><div style="position:relative;height:43px;overflow:hidden"><span class="t" style="left:2.8px;top:13.899999999999999px;font-size:12px;line-height:16px;letter-spacing:0.37px;color:#111;">Network</span></div></td><td style="border:0;border-right:1px solid #7d7d7d;border-bottom:1px solid #7d7d7d;height:44px;"><div style="position:relative;height:43px;overflow:hidden"><span class="t" style="left:2.8px;top:13.899999999999999px;font-size:12px;line-height:16px;letter-spacing:0.22px;color:#111;">Domain</span></div></td><td style="border:0;border-right:1px solid #7d7d7d;border-bottom:1px solid #7d7d7d;height:44px;"><div style="position:relative;height:43px;overflow:hidden"><span class="t" style="left:2.8px;top:13.899999999999999px;font-size:12px;line-height:16px;letter-spacing:0.09px;color:#111;">Enabled</span></div></td><td style="border:0;border-right:1px solid #7d7d7d;border-bottom:1px solid #7d7d7d;height:44px;"><div style="position:relative;height:43px;overflow:hidden"><svg class="i" style="left:11.7px;top:7.0px" width="10" height="9.4" viewBox="0 0 10 9.4" ><g fill="#4a4a4a"><rect x="2.8" y="0" width="4.2" height="2.1" rx="0.4"/><rect x="0" y="6.4" width="3.7" height="2.8" rx="0.4"/><rect x="6.1" y="6.4" width="3.7" height="2.8" rx="0.4"/></g><path d="M4.9 2.1 V4.4 M1.8 6.4 V4.4 H8 V6.4" fill="none" stroke="#4a4a4a" stroke-width="0.9"/></svg><span class="t" style="left:25.6px;top:3.8000000000000007px;font-size:12px;line-height:16px;letter-spacing:-0.15px;color:#111;">n192_168_0_0</span><svg class="i" style="left:11.7px;top:26.8px" width="10" height="9.4" viewBox="0 0 10 9.4" ><g fill="#4a4a4a"><rect x="2.8" y="0" width="4.2" height="2.1" rx="0.4"/><rect x="0" y="6.4" width="3.7" height="2.8" rx="0.4"/><rect x="6.1" y="6.4" width="3.7" height="2.8" rx="0.4"/></g><path d="M4.9 2.1 V4.4 M1.8 6.4 V4.4 H8 V6.4" fill="none" stroke="#4a4a4a" stroke-width="0.9"/></svg><span class="t" style="left:25.6px;top:23.6px;font-size:12px;line-height:16px;letter-spacing:-0.11px;color:#111;">Cato_n172_27_0_0</span></div></td><td style="border:0;border-right:1px solid #7d7d7d;border-bottom:1px solid #7d7d7d;height:44px;"><div style="position:relative;height:43px;overflow:hidden"><svg class="i" style="left:11.5px;top:17.1px" width="9" height="9" viewBox="0 0 9 9" ><g stroke="#7c7c7c" stroke-width="1.5"><path d="M0.40 4.50 L8.60 4.50"/><path d="M2.45 0.95 L6.55 8.05"/><path d="M6.55 0.95 L2.45 8.05"/></g></svg><span class="t" style="left:25.6px;top:13.899999999999999px;font-size:12px;line-height:16px;letter-spacing:-0.14px;color:#111;">Any</span></div></td><td style="border:0;border-right:1px solid #7d7d7d;border-bottom:1px solid #7d7d7d;height:44px;"><div style="position:relative;height:43px;overflow:hidden"><svg class="i" style="left:11.5px;top:17.1px" width="9" height="9" viewBox="0 0 9 9" ><g stroke="#7c7c7c" stroke-width="1.5"><path d="M0.40 4.50 L8.60 4.50"/><path d="M2.45 0.95 L6.55 8.05"/><path d="M6.55 0.95 L2.45 8.05"/></g></svg><span class="t" style="left:25.6px;top:13.899999999999999px;font-size:12px;line-height:16px;letter-spacing:-0.14px;color:#111;">Any</span></div></td><td style="border:0;border-right:1px solid #7d7d7d;border-bottom:1px solid #7d7d7d;height:44px;"><div style="position:relative;height:43px;overflow:hidden"><svg class="i" style="left:11.5px;top:17.1px" width="9" height="9" viewBox="0 0 9 9" ><g stroke="#7c7c7c" stroke-width="1.5"><path d="M0.40 4.50 L8.60 4.50"/><path d="M2.45 0.95 L6.55 8.05"/><path d="M6.55 0.95 L2.45 8.05"/></g></svg><span class="t" style="left:25.6px;top:13.899999999999999px;font-size:12px;line-height:16px;letter-spacing:-0.14px;color:#111;">Any</span></div></td><td style="border:0;border-right:1px solid #7d7d7d;border-bottom:1px solid #7d7d7d;height:44px;"><div style="position:relative;height:43px;overflow:hidden"><svg class="i" style="left:11.5px;top:17.1px" width="9" height="9" viewBox="0 0 9 9" ><g stroke="#7c7c7c" stroke-width="1.5"><path d="M0.40 4.50 L8.60 4.50"/><path d="M2.45 0.95 L6.55 8.05"/><path d="M6.55 0.95 L2.45 8.05"/></g></svg><span class="t" style="left:25.6px;top:13.899999999999999px;font-size:12px;line-height:16px;letter-spacing:-0.14px;color:#111;">Any</span></div></td><td style="border:0;border-right:1px solid #7d7d7d;border-bottom:1px solid #7d7d7d;height:44px;"><div style="position:relative;height:43px;overflow:hidden"><svg class="i" style="left:9px;top:14.0px" width="14" height="14" viewBox="0 0 14 14" ><circle cx="7" cy="7" r="7" fill="#55b313"/><g fill="#fff"><rect x="1.8" y="7" width="10.4" height="1.7"/><rect x="3.3" y="8.6" width="1.5" height="2.6"/><rect x="9.2" y="8.6" width="1.5" height="2.6"/><path d="M4.6 2.4 H6.3 V6.2 H3.2 Z"/><path d="M7.7 2.4 H9.4 L10.8 6.2 H7.7 Z"/></g></svg><span class="t" style="left:25.6px;top:13.899999999999999px;font-size:12px;line-height:16px;letter-spacing:0.05px;color:#111;">Accept</span></div></td><td style="border:0;border-right:1px solid #7d7d7d;border-bottom:1px solid #7d7d7d;height:44px;"><div style="position:relative;height:43px;overflow:hidden"><svg class="i" style="left:10px;top:13.0px" width="11" height="13.8" viewBox="0 0 11 13.8" ><rect x="0.6" y="1.9" width="9.8" height="11.2" rx="0.9" fill="#fff" stroke="#1f3354" stroke-width="1.2"/><path d="M1.6 2.9 V1.2 H4.2 V0.2 H6.8 V1.2 H9.4 V2.9 Z" fill="#1f3354"/><path d="M2.7 6.5 H8.3 M2.7 8.5 H8.3 M2.7 10.5 H8.3" stroke="#1f3354" stroke-width="1"/></svg><span class="t" style="left:25.6px;top:13.899999999999999px;font-size:12px;line-height:16px;letter-spacing:-0.04px;color:#111;">Log</span></div></td></tr><tr><td colspan="15" style="border:0;border-bottom:1px solid #7d7d7d;border-right:1px solid #7d7d7d;height:30px;background:#fff9b0"><div style="position:relative;height:29px"><span class="t" style="left:5.2px;top:6.600000000000001px;font-size:12px;line-height:16px;letter-spacing:-0.17px;color:#444;font-weight:bold;">Nachos Rules (4-10)</span></div></td></tr><tr><td style="border:0;border-right:1px solid #7d7d7d;border-bottom:1px solid #7d7d7d;height:24px;"><div style="position:relative;height:23px;overflow:hidden"><div class="b" style="left:8.8px;top:4.8px;width:13.4px;height:13.4px;border:1px solid #767676;border-radius:2.5px;background:#fff"></div></div></td><td style="border:0;border-right:1px solid #7d7d7d;border-bottom:1px solid #7d7d7d;height:24px;"><div style="position:relative;height:23px;overflow:hidden"><svg class="i" style="left:23px;top:3.0px" width="18" height="18" viewBox="0 0 18 18" ><path d="M5 14.5 H2.5 Q1.5 14.5 1.5 13.5 V2.5 Q1.5 1.5 2.5 1.5 H6.5 L9.5 4.5 V7.6" fill="none" stroke="#625ac2" stroke-width="1"/><path d="M6.5 1.5 V4.5 H9.5" fill="none" stroke="#625ac2" stroke-width="1"/><g transform="translate(5.5,16.6) rotate(-44)"><path d="M0 0 L2.6 -2.1 H11.8 V2.1 H2.6 Z" fill="#3d5db5"/><rect x="12.5" y="-2.1" width="2.7" height="4.2" fill="#3d5db5"/><path d="M0.6 0 L2.3 -1.3 V1.3 Z" fill="#fff"/><path d="M3.4 0 H11.2" stroke="#dfe6f7" stroke-width="0.7" stroke-dasharray="1 0.8"/></g></svg></div></td><td style="border:0;border-right:1px solid #7d7d7d;border-bottom:1px solid #7d7d7d;height:24px;"><div style="position:relative;height:23px;overflow:hidden"><span class="t" style="left:3.4px;top:3.9000000000000004px;font-size:12px;line-height:16px;letter-spacing:-0.21px;color:#111;">4</span></div></td><td style="border:0;border-right:1px solid #7d7d7d;border-bottom:1px solid #7d7d7d;height:24px;"><div style="position:relative;height:23px;overflow:hidden"></div></td><td style="border:0;border-right:1px solid #7d7d7d;border-bottom:1px solid #7d7d7d;height:24px;"><div style="position:relative;height:23px;overflow:hidden"><span class="t" style="left:2.8px;top:3.9000000000000004px;font-size:12px;line-height:16px;letter-spacing:0.14px;color:#111;">Ordered</span></div></td><td style="border:0;border-right:1px solid #7d7d7d;border-bottom:1px solid #7d7d7d;height:24px;"><div style="position:relative;height:23px;overflow:hidden"><span class="t" style="left:2.8px;top:3.9000000000000004px;font-size:12px;line-height:16px;letter-spacing:0.37px;color:#111;">Network</span></div></td><td style="border:0;border-right:1px solid #7d7d7d;border-bottom:1px solid #7d7d7d;height:24px;"><div style="position:relative;height:23px;overflow:hidden"><span class="t" style="left:2.8px;top:3.9000000000000004px;font-size:12px;line-height:16px;letter-spacing:0.22px;color:#111;">Domain</span></div></td><td style="border:0;border-right:1px solid #7d7d7d;border-bottom:1px solid #7d7d7d;height:24px;"><div style="position:relative;height:23px;overflow:hidden"><span class="t" style="left:2.8px;top:3.9000000000000004px;font-size:12px;line-height:16px;letter-spacing:0.09px;color:#111;">Enabled</span></div></td><td style="border:0;border-right:1px solid #7d7d7d;border-bottom:1px solid #7d7d7d;height:24px;"><div style="position:relative;height:23px;overflow:hidden"><svg class="i" style="left:11.7px;top:7.1px" width="10" height="9.4" viewBox="0 0 10 9.4" ><g fill="#4a4a4a"><rect x="2.8" y="0" width="4.2" height="2.1" rx="0.4"/><rect x="0" y="6.4" width="3.7" height="2.8" rx="0.4"/><rect x="6.1" y="6.4" width="3.7" height="2.8" rx="0.4"/></g><path d="M4.9 2.1 V4.4 M1.8 6.4 V4.4 H8 V6.4" fill="none" stroke="#4a4a4a" stroke-width="0.9"/></svg><span class="t" style="left:25.6px;top:3.9000000000000004px;font-size:12px;line-height:16px;letter-spacing:-0.15px;color:#111;">n10_10_219_0</span></div></td><td style="border:0;border-right:1px solid #7d7d7d;border-bottom:1px solid #7d7d7d;height:24px;"><div style="position:relative;height:23px;overflow:hidden"><svg class="i" style="left:11.5px;top:7.1px" width="9" height="9" viewBox="0 0 9 9" ><g stroke="#7c7c7c" stroke-width="1.5"><path d="M0.40 4.50 L8.60 4.50"/><path d="M2.45 0.95 L6.55 8.05"/><path d="M6.55 0.95 L2.45 8.05"/></g></svg><span class="t" style="left:25.6px;top:3.9000000000000004px;font-size:12px;line-height:16px;letter-spacing:-0.14px;color:#111;">Any</span></div></td><td style="border:0;border-right:1px solid #7d7d7d;border-bottom:1px solid #7d7d7d;height:24px;"><div style="position:relative;height:23px;overflow:hidden"><svg class="i" style="left:11.5px;top:7.1px" width="9" height="9" viewBox="0 0 9 9" ><g stroke="#7c7c7c" stroke-width="1.5"><path d="M0.40 4.50 L8.60 4.50"/><path d="M2.45 0.95 L6.55 8.05"/><path d="M6.55 0.95 L2.45 8.05"/></g></svg><span class="t" style="left:25.6px;top:3.9000000000000004px;font-size:12px;line-height:16px;letter-spacing:-0.14px;color:#111;">Any</span></div></td><td style="border:0;border-right:1px solid #7d7d7d;border-bottom:1px solid #7d7d7d;height:24px;"><div style="position:relative;height:23px;overflow:hidden"><svg class="i" style="left:11.5px;top:7.1px" width="9" height="9" viewBox="0 0 9 9" ><g stroke="#7c7c7c" stroke-width="1.5"><path d="M0.40 4.50 L8.60 4.50"/><path d="M2.45 0.95 L6.55 8.05"/><path d="M6.55 0.95 L2.45 8.05"/></g></svg><span class="t" style="left:25.6px;top:3.9000000000000004px;font-size:12px;line-height:16px;letter-spacing:-0.14px;color:#111;">Any</span></div></td><td style="border:0;border-right:1px solid #7d7d7d;border-bottom:1px solid #7d7d7d;height:24px;"><div style="position:relative;height:23px;overflow:hidden"><svg class="i" style="left:11.5px;top:7.1px" width="9" height="9" viewBox="0 0 9 9" ><g stroke="#7c7c7c" stroke-width="1.5"><path d="M0.40 4.50 L8.60 4.50"/><path d="M2.45 0.95 L6.55 8.05"/><path d="M6.55 0.95 L2.45 8.05"/></g></svg><span class="t" style="left:25.6px;top:3.9000000000000004px;font-size:12px;line-height:16px;letter-spacing:-0.14px;color:#111;">Any</span></div></td><td style="border:0;border-right:1px solid #7d7d7d;border-bottom:1px solid #7d7d7d;height:24px;"><div style="position:relative;height:23px;overflow:hidden"><svg class="i" style="left:9px;top:4.0px" width="14" height="14" viewBox="0 0 14 14" ><circle cx="7" cy="7" r="7" fill="#55b313"/><g fill="#fff"><rect x="1.8" y="7" width="10.4" height="1.7"/><rect x="3.3" y="8.6" width="1.5" height="2.6"/><rect x="9.2" y="8.6" width="1.5" height="2.6"/><path d="M4.6 2.4 H6.3 V6.2 H3.2 Z"/><path d="M7.7 2.4 H9.4 L10.8 6.2 H7.7 Z"/></g></svg><span class="t" style="left:25.6px;top:3.9000000000000004px;font-size:12px;line-height:16px;letter-spacing:0.05px;color:#111;">Accept</span></div></td><td style="border:0;border-right:1px solid #7d7d7d;border-bottom:1px solid #7d7d7d;height:24px;"><div style="position:relative;height:23px;overflow:hidden"><svg class="i" style="left:10px;top:3.0px" width="11" height="13.8" viewBox="0 0 11 13.8" ><rect x="0.6" y="1.9" width="9.8" height="11.2" rx="0.9" fill="#fff" stroke="#1f3354" stroke-width="1.2"/><path d="M1.6 2.9 V1.2 H4.2 V0.2 H6.8 V1.2 H9.4 V2.9 Z" fill="#1f3354"/><path d="M2.7 6.5 H8.3 M2.7 8.5 H8.3 M2.7 10.5 H8.3" stroke="#1f3354" stroke-width="1"/></svg><span class="t" style="left:25.6px;top:3.9000000000000004px;font-size:12px;line-height:16px;letter-spacing:-0.04px;color:#111;">Log</span></div></td></tr><tr><td style="border:0;border-right:1px solid #7d7d7d;border-bottom:1px solid #7d7d7d;height:24px;"><div style="position:relative;height:23px;overflow:hidden"><div class="b" style="left:8.8px;top:4.8px;width:13.4px;height:13.4px;border:1px solid #767676;border-radius:2.5px;background:#fff"></div></div></td><td style="border:0;border-right:1px solid #7d7d7d;border-bottom:1px solid #7d7d7d;height:24px;"><div style="position:relative;height:23px;overflow:hidden"><svg class="i" style="left:23px;top:3.0px" width="18" height="18" viewBox="0 0 18 18" ><path d="M5 14.5 H2.5 Q1.5 14.5 1.5 13.5 V2.5 Q1.5 1.5 2.5 1.5 H6.5 L9.5 4.5 V7.6" fill="none" stroke="#625ac2" stroke-width="1"/><path d="M6.5 1.5 V4.5 H9.5" fill="none" stroke="#625ac2" stroke-width="1"/><g transform="translate(5.5,16.6) rotate(-44)"><path d="M0 0 L2.6 -2.1 H11.8 V2.1 H2.6 Z" fill="#3d5db5"/><rect x="12.5" y="-2.1" width="2.7" height="4.2" fill="#3d5db5"/><path d="M0.6 0 L2.3 -1.3 V1.3 Z" fill="#fff"/><path d="M3.4 0 H11.2" stroke="#dfe6f7" stroke-width="0.7" stroke-dasharray="1 0.8"/></g></svg></div></td><td style="border:0;border-right:1px solid #7d7d7d;border-bottom:1px solid #7d7d7d;height:24px;"><div style="position:relative;height:23px;overflow:hidden"><span class="t" style="left:3.4px;top:3.9000000000000004px;font-size:12px;line-height:16px;letter-spacing:-0.21px;color:#111;">5</span></div></td><td style="border:0;border-right:1px solid #7d7d7d;border-bottom:1px solid #7d7d7d;height:24px;"><div style="position:relative;height:23px;overflow:hidden"></div></td><td style="border:0;border-right:1px solid #7d7d7d;border-bottom:1px solid #7d7d7d;height:24px;"><div style="position:relative;height:23px;overflow:hidden"><span class="t" style="left:2.8px;top:3.9000000000000004px;font-size:12px;line-height:16px;letter-spacing:0.14px;color:#111;">Ordered</span></div></td><td style="border:0;border-right:1px solid #7d7d7d;border-bottom:1px solid #7d7d7d;height:24px;"><div style="position:relative;height:23px;overflow:hidden"><span class="t" style="left:2.8px;top:3.9000000000000004px;font-size:12px;line-height:16px;letter-spacing:0.37px;color:#111;">Network</span></div></td><td style="border:0;border-right:1px solid #7d7d7d;border-bottom:1px solid #7d7d7d;height:24px;"><div style="position:relative;height:23px;overflow:hidden"><span class="t" style="left:2.8px;top:3.9000000000000004px;font-size:12px;line-height:16px;letter-spacing:0.22px;color:#111;">Domain</span></div></td><td style="border:0;border-right:1px solid #7d7d7d;border-bottom:1px solid #7d7d7d;height:24px;"><div style="position:relative;height:23px;overflow:hidden"><span class="t" style="left:2.8px;top:3.9000000000000004px;font-size:12px;line-height:16px;letter-spacing:0.09px;color:#111;">Enabled</span></div></td><td style="border:0;border-right:1px solid #7d7d7d;border-bottom:1px solid #7d7d7d;height:24px;"><div style="position:relative;height:23px;overflow:hidden"><svg class="i" style="left:11.7px;top:7.1px" width="10" height="9.4" viewBox="0 0 10 9.4" ><g fill="#4a4a4a"><rect x="2.8" y="0" width="4.2" height="2.1" rx="0.4"/><rect x="0" y="6.4" width="3.7" height="2.8" rx="0.4"/><rect x="6.1" y="6.4" width="3.7" height="2.8" rx="0.4"/></g><path d="M4.9 2.1 V4.4 M1.8 6.4 V4.4 H8 V6.4" fill="none" stroke="#4a4a4a" stroke-width="0.9"/></svg><span class="t" style="left:25.6px;top:3.9000000000000004px;font-size:12px;line-height:16px;letter-spacing:-0.15px;color:#111;">n10_30_219_0</span></div></td><td style="border:0;border-right:1px solid #7d7d7d;border-bottom:1px solid #7d7d7d;height:24px;"><div style="position:relative;height:23px;overflow:hidden"><svg class="i" style="left:11.5px;top:7.1px" width="9" height="9" viewBox="0 0 9 9" ><g stroke="#7c7c7c" stroke-width="1.5"><path d="M0.40 4.50 L8.60 4.50"/><path d="M2.45 0.95 L6.55 8.05"/><path d="M6.55 0.95 L2.45 8.05"/></g></svg><span class="t" style="left:25.6px;top:3.9000000000000004px;font-size:12px;line-height:16px;letter-spacing:-0.14px;color:#111;">Any</span></div></td><td style="border:0;border-right:1px solid #7d7d7d;border-bottom:1px solid #7d7d7d;height:24px;"><div style="position:relative;height:23px;overflow:hidden"><svg class="i" style="left:11.5px;top:7.1px" width="9" height="9" viewBox="0 0 9 9" ><g stroke="#7c7c7c" stroke-width="1.5"><path d="M0.40 4.50 L8.60 4.50"/><path d="M2.45 0.95 L6.55 8.05"/><path d="M6.55 0.95 L2.45 8.05"/></g></svg><span class="t" style="left:25.6px;top:3.9000000000000004px;font-size:12px;line-height:16px;letter-spacing:-0.14px;color:#111;">Any</span></div></td><td style="border:0;border-right:1px solid #7d7d7d;border-bottom:1px solid #7d7d7d;height:24px;"><div style="position:relative;height:23px;overflow:hidden"><svg class="i" style="left:11.5px;top:7.1px" width="9" height="9" viewBox="0 0 9 9" ><g stroke="#7c7c7c" stroke-width="1.5"><path d="M0.40 4.50 L8.60 4.50"/><path d="M2.45 0.95 L6.55 8.05"/><path d="M6.55 0.95 L2.45 8.05"/></g></svg><span class="t" style="left:25.6px;top:3.9000000000000004px;font-size:12px;line-height:16px;letter-spacing:-0.14px;color:#111;">Any</span></div></td><td style="border:0;border-right:1px solid #7d7d7d;border-bottom:1px solid #7d7d7d;height:24px;"><div style="position:relative;height:23px;overflow:hidden"><svg class="i" style="left:11.5px;top:7.1px" width="9" height="9" viewBox="0 0 9 9" ><g stroke="#7c7c7c" stroke-width="1.5"><path d="M0.40 4.50 L8.60 4.50"/><path d="M2.45 0.95 L6.55 8.05"/><path d="M6.55 0.95 L2.45 8.05"/></g></svg><span class="t" style="left:25.6px;top:3.9000000000000004px;font-size:12px;line-height:16px;letter-spacing:-0.14px;color:#111;">Any</span></div></td><td style="border:0;border-right:1px solid #7d7d7d;border-bottom:1px solid #7d7d7d;height:24px;"><div style="position:relative;height:23px;overflow:hidden"><svg class="i" style="left:9px;top:4.0px" width="14" height="14" viewBox="0 0 14 14" ><circle cx="7" cy="7" r="7" fill="#55b313"/><g fill="#fff"><rect x="1.8" y="7" width="10.4" height="1.7"/><rect x="3.3" y="8.6" width="1.5" height="2.6"/><rect x="9.2" y="8.6" width="1.5" height="2.6"/><path d="M4.6 2.4 H6.3 V6.2 H3.2 Z"/><path d="M7.7 2.4 H9.4 L10.8 6.2 H7.7 Z"/></g></svg><span class="t" style="left:25.6px;top:3.9000000000000004px;font-size:12px;line-height:16px;letter-spacing:0.05px;color:#111;">Accept</span></div></td><td style="border:0;border-right:1px solid #7d7d7d;border-bottom:1px solid #7d7d7d;height:24px;"><div style="position:relative;height:23px;overflow:hidden"><svg class="i" style="left:10px;top:3.0px" width="11" height="13.8" viewBox="0 0 11 13.8" ><rect x="0.6" y="1.9" width="9.8" height="11.2" rx="0.9" fill="#fff" stroke="#1f3354" stroke-width="1.2"/><path d="M1.6 2.9 V1.2 H4.2 V0.2 H6.8 V1.2 H9.4 V2.9 Z" fill="#1f3354"/><path d="M2.7 6.5 H8.3 M2.7 8.5 H8.3 M2.7 10.5 H8.3" stroke="#1f3354" stroke-width="1"/></svg><span class="t" style="left:25.6px;top:3.9000000000000004px;font-size:12px;line-height:16px;letter-spacing:-0.04px;color:#111;">Log</span></div></td></tr><tr><td style="border:0;border-right:1px solid #7d7d7d;border-bottom:1px solid #7d7d7d;height:24px;"><div style="position:relative;height:23px;overflow:hidden"><div class="b" style="left:8.8px;top:4.8px;width:13.4px;height:13.4px;border:1px solid #767676;border-radius:2.5px;background:#fff"></div></div></td><td style="border:0;border-right:1px solid #7d7d7d;border-bottom:1px solid #7d7d7d;height:24px;"><div style="position:relative;height:23px;overflow:hidden"><svg class="i" style="left:23px;top:3.0px" width="18" height="18" viewBox="0 0 18 18" ><path d="M5 14.5 H2.5 Q1.5 14.5 1.5 13.5 V2.5 Q1.5 1.5 2.5 1.5 H6.5 L9.5 4.5 V7.6" fill="none" stroke="#bdbdbd" stroke-width="1"/><path d="M6.5 1.5 V4.5 H9.5" fill="none" stroke="#bdbdbd" stroke-width="1"/><g transform="translate(5.5,16.6) rotate(-44)"><path d="M0 0 L2.6 -2.1 H11.8 V2.1 H2.6 Z" fill="#b4b4b4"/><rect x="12.5" y="-2.1" width="2.7" height="4.2" fill="#b4b4b4"/><path d="M0.6 0 L2.3 -1.3 V1.3 Z" fill="#fff"/><path d="M3.4 0 H11.2" stroke="#dfe6f7" stroke-width="0.7" stroke-dasharray="1 0.8"/></g></svg></div></td><td style="border:0;border-right:1px solid #7d7d7d;border-bottom:1px solid #7d7d7d;height:24px;"><div style="position:relative;height:23px;overflow:hidden"><span class="t" style="left:3.4px;top:3.9000000000000004px;font-size:12px;line-height:16px;letter-spacing:-0.21px;color:#adadad;">6</span></div></td><td style="border:0;border-right:1px solid #7d7d7d;border-bottom:1px solid #7d7d7d;height:24px;"><div style="position:relative;height:23px;overflow:hidden"></div></td><td style="border:0;border-right:1px solid #7d7d7d;border-bottom:1px solid #7d7d7d;height:24px;"><div style="position:relative;height:23px;overflow:hidden"><span class="t" style="left:2.8px;top:3.9000000000000004px;font-size:12px;line-height:16px;letter-spacing:0.14px;color:#adadad;">Ordered</span></div></td><td style="border:0;border-right:1px solid #7d7d7d;border-bottom:1px solid #7d7d7d;height:24px;"><div style="position:relative;height:23px;overflow:hidden"><span class="t" style="left:2.8px;top:3.9000000000000004px;font-size:12px;line-height:16px;letter-spacing:0.37px;color:#adadad;">Network</span></div></td><td style="border:0;border-right:1px solid #7d7d7d;border-bottom:1px solid #7d7d7d;height:24px;"><div style="position:relative;height:23px;overflow:hidden"><span class="t" style="left:2.8px;top:3.9000000000000004px;font-size:12px;line-height:16px;letter-spacing:0.22px;color:#adadad;">Domain</span></div></td><td style="border:0;border-right:1px solid #7d7d7d;border-bottom:1px solid #7d7d7d;height:24px;"><div style="position:relative;height:23px;overflow:hidden"><span class="t" style="left:2.8px;top:3.9000000000000004px;font-size:12px;line-height:16px;letter-spacing:0.08px;color:#adadad;">Disabled</span></div></td><td style="border:0;border-right:1px solid #7d7d7d;border-bottom:1px solid #7d7d7d;height:24px;"><div style="position:relative;height:23px;overflow:hidden"><svg class="i" style="left:11.7px;top:7.1px" width="10" height="9.4" viewBox="0 0 10 9.4" ><g fill="#4a4a4a"><rect x="2.8" y="0" width="4.2" height="2.1" rx="0.4"/><rect x="0" y="6.4" width="3.7" height="2.8" rx="0.4"/><rect x="6.1" y="6.4" width="3.7" height="2.8" rx="0.4"/></g><path d="M4.9 2.1 V4.4 M1.8 6.4 V4.4 H8 V6.4" fill="none" stroke="#4a4a4a" stroke-width="0.9"/></svg><span class="t" style="left:25.6px;top:3.9000000000000004px;font-size:12px;line-height:16px;letter-spacing:-0.15px;color:#adadad;">n10_40_219_0</span></div></td><td style="border:0;border-right:1px solid #7d7d7d;border-bottom:1px solid #7d7d7d;height:24px;"><div style="position:relative;height:23px;overflow:hidden"><svg class="i" style="left:11.5px;top:7.1px" width="9" height="9" viewBox="0 0 9 9" ><g stroke="#7c7c7c" stroke-width="1.5"><path d="M0.40 4.50 L8.60 4.50"/><path d="M2.45 0.95 L6.55 8.05"/><path d="M6.55 0.95 L2.45 8.05"/></g></svg><span class="t" style="left:25.6px;top:3.9000000000000004px;font-size:12px;line-height:16px;letter-spacing:-0.14px;color:#adadad;">Any</span></div></td><td style="border:0;border-right:1px solid #7d7d7d;border-bottom:1px solid #7d7d7d;height:24px;"><div style="position:relative;height:23px;overflow:hidden"><svg class="i" style="left:11.5px;top:7.1px" width="9" height="9" viewBox="0 0 9 9" ><g stroke="#7c7c7c" stroke-width="1.5"><path d="M0.40 4.50 L8.60 4.50"/><path d="M2.45 0.95 L6.55 8.05"/><path d="M6.55 0.95 L2.45 8.05"/></g></svg><span class="t" style="left:25.6px;top:3.9000000000000004px;font-size:12px;line-height:16px;letter-spacing:-0.14px;color:#adadad;">Any</span></div></td><td style="border:0;border-right:1px solid #7d7d7d;border-bottom:1px solid #7d7d7d;height:24px;"><div style="position:relative;height:23px;overflow:hidden"><svg class="i" style="left:11.5px;top:7.1px" width="9" height="9" viewBox="0 0 9 9" ><g stroke="#7c7c7c" stroke-width="1.5"><path d="M0.40 4.50 L8.60 4.50"/><path d="M2.45 0.95 L6.55 8.05"/><path d="M6.55 0.95 L2.45 8.05"/></g></svg><span class="t" style="left:25.6px;top:3.9000000000000004px;font-size:12px;line-height:16px;letter-spacing:-0.14px;color:#adadad;">Any</span></div></td><td style="border:0;border-right:1px solid #7d7d7d;border-bottom:1px solid #7d7d7d;height:24px;"><div style="position:relative;height:23px;overflow:hidden"><svg class="i" style="left:11.5px;top:7.1px" width="9" height="9" viewBox="0 0 9 9" ><g stroke="#7c7c7c" stroke-width="1.5"><path d="M0.40 4.50 L8.60 4.50"/><path d="M2.45 0.95 L6.55 8.05"/><path d="M6.55 0.95 L2.45 8.05"/></g></svg><span class="t" style="left:25.6px;top:3.9000000000000004px;font-size:12px;line-height:16px;letter-spacing:-0.14px;color:#adadad;">Any</span></div></td><td style="border:0;border-right:1px solid #7d7d7d;border-bottom:1px solid #7d7d7d;height:24px;"><div style="position:relative;height:23px;overflow:hidden"><svg class="i" style="left:9px;top:4.0px" width="14" height="14" viewBox="0 0 14 14" ><circle cx="7" cy="7" r="7" fill="#55b313"/><g fill="#fff"><rect x="1.8" y="7" width="10.4" height="1.7"/><rect x="3.3" y="8.6" width="1.5" height="2.6"/><rect x="9.2" y="8.6" width="1.5" height="2.6"/><path d="M4.6 2.4 H6.3 V6.2 H3.2 Z"/><path d="M7.7 2.4 H9.4 L10.8 6.2 H7.7 Z"/></g></svg><span class="t" style="left:25.6px;top:3.9000000000000004px;font-size:12px;line-height:16px;letter-spacing:0.05px;color:#adadad;">Accept</span></div></td><td style="border:0;border-right:1px solid #7d7d7d;border-bottom:1px solid #7d7d7d;height:24px;"><div style="position:relative;height:23px;overflow:hidden"><svg class="i" style="left:10px;top:3.0px" width="11" height="13.8" viewBox="0 0 11 13.8" ><rect x="0.6" y="1.9" width="9.8" height="11.2" rx="0.9" fill="#fff" stroke="#1f3354" stroke-width="1.2"/><path d="M1.6 2.9 V1.2 H4.2 V0.2 H6.8 V1.2 H9.4 V2.9 Z" fill="#1f3354"/><path d="M2.7 6.5 H8.3 M2.7 8.5 H8.3 M2.7 10.5 H8.3" stroke="#1f3354" stroke-width="1"/></svg><span class="t" style="left:25.6px;top:3.9000000000000004px;font-size:12px;line-height:16px;letter-spacing:-0.04px;color:#adadad;">Log</span></div></td></tr><tr><td style="border:0;border-right:1px solid #7d7d7d;border-bottom:1px solid #7d7d7d;height:24px;"><div style="position:relative;height:23px;overflow:hidden"><div class="b" style="left:8.8px;top:4.8px;width:13.4px;height:13.4px;border:1px solid #767676;border-radius:2.5px;background:#fff"></div></div></td><td style="border:0;border-right:1px solid #7d7d7d;border-bottom:1px solid #7d7d7d;height:24px;"><div style="position:relative;height:23px;overflow:hidden"><svg class="i" style="left:23px;top:3.0px" width="18" height="18" viewBox="0 0 18 18" ><path d="M5 14.5 H2.5 Q1.5 14.5 1.5 13.5 V2.5 Q1.5 1.5 2.5 1.5 H6.5 L9.5 4.5 V7.6" fill="none" stroke="#625ac2" stroke-width="1"/><path d="M6.5 1.5 V4.5 H9.5" fill="none" stroke="#625ac2" stroke-width="1"/><g transform="translate(5.5,16.6) rotate(-44)"><path d="M0 0 L2.6 -2.1 H11.8 V2.1 H2.6 Z" fill="#3d5db5"/><rect x="12.5" y="-2.1" width="2.7" height="4.2" fill="#3d5db5"/><path d="M0.6 0 L2.3 -1.3 V1.3 Z" fill="#fff"/><path d="M3.4 0 H11.2" stroke="#dfe6f7" stroke-width="0.7" stroke-dasharray="1 0.8"/></g></svg></div></td><td style="border:0;border-right:1px solid #7d7d7d;border-bottom:1px solid #7d7d7d;height:24px;"><div style="position:relative;height:23px;overflow:hidden"><span class="t" style="left:3.4px;top:3.9000000000000004px;font-size:12px;line-height:16px;letter-spacing:-0.21px;color:#111;">7</span></div></td><td style="border:0;border-right:1px solid #7d7d7d;border-bottom:1px solid #7d7d7d;height:24px;"><div style="position:relative;height:23px;overflow:hidden"></div></td><td style="border:0;border-right:1px solid #7d7d7d;border-bottom:1px solid #7d7d7d;height:24px;"><div style="position:relative;height:23px;overflow:hidden"><span class="t" style="left:2.8px;top:3.9000000000000004px;font-size:12px;line-height:16px;letter-spacing:0.14px;color:#111;">Ordered</span></div></td><td style="border:0;border-right:1px solid #7d7d7d;border-bottom:1px solid #7d7d7d;height:24px;"><div style="position:relative;height:23px;overflow:hidden"><span class="t" style="left:2.8px;top:3.9000000000000004px;font-size:12px;line-height:16px;letter-spacing:0.37px;color:#111;">Network</span></div></td><td style="border:0;border-right:1px solid #7d7d7d;border-bottom:1px solid #7d7d7d;height:24px;"><div style="position:relative;height:23px;overflow:hidden"><span class="t" style="left:2.8px;top:3.9000000000000004px;font-size:12px;line-height:16px;letter-spacing:0.22px;color:#111;">Domain</span></div></td><td style="border:0;border-right:1px solid #7d7d7d;border-bottom:1px solid #7d7d7d;height:24px;"><div style="position:relative;height:23px;overflow:hidden"><span class="t" style="left:2.8px;top:3.9000000000000004px;font-size:12px;line-height:16px;letter-spacing:0.09px;color:#111;">Enabled</span></div></td><td style="border:0;border-right:1px solid #7d7d7d;border-bottom:1px solid #7d7d7d;height:24px;"><div style="position:relative;height:23px;overflow:hidden"><svg class="i" style="left:11.7px;top:7.1px" width="10" height="9.4" viewBox="0 0 10 9.4" ><g fill="#4a4a4a"><rect x="2.8" y="0" width="4.2" height="2.1" rx="0.4"/><rect x="0" y="6.4" width="3.7" height="2.8" rx="0.4"/><rect x="6.1" y="6.4" width="3.7" height="2.8" rx="0.4"/></g><path d="M4.9 2.1 V4.4 M1.8 6.4 V4.4 H8 V6.4" fill="none" stroke="#4a4a4a" stroke-width="0.9"/></svg><span class="t" style="left:25.6px;top:3.9000000000000004px;font-size:12px;line-height:16px;letter-spacing:-0.15px;color:#111;">n10_50_219_0</span></div></td><td style="border:0;border-right:1px solid #7d7d7d;border-bottom:1px solid #7d7d7d;height:24px;"><div style="position:relative;height:23px;overflow:hidden"><svg class="i" style="left:11.5px;top:7.1px" width="9" height="9" viewBox="0 0 9 9" ><g stroke="#7c7c7c" stroke-width="1.5"><path d="M0.40 4.50 L8.60 4.50"/><path d="M2.45 0.95 L6.55 8.05"/><path d="M6.55 0.95 L2.45 8.05"/></g></svg><span class="t" style="left:25.6px;top:3.9000000000000004px;font-size:12px;line-height:16px;letter-spacing:-0.14px;color:#111;">Any</span></div></td><td style="border:0;border-right:1px solid #7d7d7d;border-bottom:1px solid #7d7d7d;height:24px;"><div style="position:relative;height:23px;overflow:hidden"><svg class="i" style="left:11.5px;top:7.1px" width="9" height="9" viewBox="0 0 9 9" ><g stroke="#7c7c7c" stroke-width="1.5"><path d="M0.40 4.50 L8.60 4.50"/><path d="M2.45 0.95 L6.55 8.05"/><path d="M6.55 0.95 L2.45 8.05"/></g></svg><span class="t" style="left:25.6px;top:3.9000000000000004px;font-size:12px;line-height:16px;letter-spacing:-0.14px;color:#111;">Any</span></div></td><td style="border:0;border-right:1px solid #7d7d7d;border-bottom:1px solid #7d7d7d;height:24px;"><div style="position:relative;height:23px;overflow:hidden"><svg class="i" style="left:11.5px;top:7.1px" width="9" height="9" viewBox="0 0 9 9" ><g stroke="#7c7c7c" stroke-width="1.5"><path d="M0.40 4.50 L8.60 4.50"/><path d="M2.45 0.95 L6.55 8.05"/><path d="M6.55 0.95 L2.45 8.05"/></g></svg><span class="t" style="left:25.6px;top:3.9000000000000004px;font-size:12px;line-height:16px;letter-spacing:-0.14px;color:#111;">Any</span></div></td><td style="border:0;border-right:1px solid #7d7d7d;border-bottom:1px solid #7d7d7d;height:24px;"><div style="position:relative;height:23px;overflow:hidden"><svg class="i" style="left:11.5px;top:7.1px" width="9" height="9" viewBox="0 0 9 9" ><g stroke="#7c7c7c" stroke-width="1.5"><path d="M0.40 4.50 L8.60 4.50"/><path d="M2.45 0.95 L6.55 8.05"/><path d="M6.55 0.95 L2.45 8.05"/></g></svg><span class="t" style="left:25.6px;top:3.9000000000000004px;font-size:12px;line-height:16px;letter-spacing:-0.14px;color:#111;">Any</span></div></td><td style="border:0;border-right:1px solid #7d7d7d;border-bottom:1px solid #7d7d7d;height:24px;"><div style="position:relative;height:23px;overflow:hidden"><svg class="i" style="left:9px;top:4.0px" width="14" height="14" viewBox="0 0 14 14" ><circle cx="7" cy="7" r="7" fill="#55b313"/><g fill="#fff"><rect x="1.8" y="7" width="10.4" height="1.7"/><rect x="3.3" y="8.6" width="1.5" height="2.6"/><rect x="9.2" y="8.6" width="1.5" height="2.6"/><path d="M4.6 2.4 H6.3 V6.2 H3.2 Z"/><path d="M7.7 2.4 H9.4 L10.8 6.2 H7.7 Z"/></g></svg><span class="t" style="left:25.6px;top:3.9000000000000004px;font-size:12px;line-height:16px;letter-spacing:0.05px;color:#111;">Accept</span></div></td><td style="border:0;border-right:1px solid #7d7d7d;border-bottom:1px solid #7d7d7d;height:24px;"><div style="position:relative;height:23px;overflow:hidden"><svg class="i" style="left:10px;top:3.0px" width="11" height="13.8" viewBox="0 0 11 13.8" ><rect x="0.6" y="1.9" width="9.8" height="11.2" rx="0.9" fill="#fff" stroke="#1f3354" stroke-width="1.2"/><path d="M1.6 2.9 V1.2 H4.2 V0.2 H6.8 V1.2 H9.4 V2.9 Z" fill="#1f3354"/><path d="M2.7 6.5 H8.3 M2.7 8.5 H8.3 M2.7 10.5 H8.3" stroke="#1f3354" stroke-width="1"/></svg><span class="t" style="left:25.6px;top:3.9000000000000004px;font-size:12px;line-height:16px;letter-spacing:-0.04px;color:#111;">Log</span></div></td></tr><tr><td style="border:0;border-right:1px solid #7d7d7d;border-bottom:1px solid #7d7d7d;height:24px;"><div style="position:relative;height:23px;overflow:hidden"><div class="b" style="left:8.8px;top:4.8px;width:13.4px;height:13.4px;border:1px solid #767676;border-radius:2.5px;background:#fff"></div></div></td><td style="border:0;border-right:1px solid #7d7d7d;border-bottom:1px solid #7d7d7d;height:24px;"><div style="position:relative;height:23px;overflow:hidden"><svg class="i" style="left:23px;top:3.0px" width="18" height="18" viewBox="0 0 18 18" ><path d="M5 14.5 H2.5 Q1.5 14.5 1.5 13.5 V2.5 Q1.5 1.5 2.5 1.5 H6.5 L9.5 4.5 V7.6" fill="none" stroke="#625ac2" stroke-width="1"/><path d="M6.5 1.5 V4.5 H9.5" fill="none" stroke="#625ac2" stroke-width="1"/><g transform="translate(5.5,16.6) rotate(-44)"><path d="M0 0 L2.6 -2.1 H11.8 V2.1 H2.6 Z" fill="#3d5db5"/><rect x="12.5" y="-2.1" width="2.7" height="4.2" fill="#3d5db5"/><path d="M0.6 0 L2.3 -1.3 V1.3 Z" fill="#fff"/><path d="M3.4 0 H11.2" stroke="#dfe6f7" stroke-width="0.7" stroke-dasharray="1 0.8"/></g></svg></div></td><td style="border:0;border-right:1px solid #7d7d7d;border-bottom:1px solid #7d7d7d;height:24px;"><div style="position:relative;height:23px;overflow:hidden"><span class="t" style="left:3.4px;top:3.9000000000000004px;font-size:12px;line-height:16px;letter-spacing:-0.21px;color:#111;">8</span></div></td><td style="border:0;border-right:1px solid #7d7d7d;border-bottom:1px solid #7d7d7d;height:24px;"><div style="position:relative;height:23px;overflow:hidden"></div></td><td style="border:0;border-right:1px solid #7d7d7d;border-bottom:1px solid #7d7d7d;height:24px;"><div style="position:relative;height:23px;overflow:hidden"><span class="t" style="left:2.8px;top:3.9000000000000004px;font-size:12px;line-height:16px;letter-spacing:0.14px;color:#111;">Ordered</span></div></td><td style="border:0;border-right:1px solid #7d7d7d;border-bottom:1px solid #7d7d7d;height:24px;"><div style="position:relative;height:23px;overflow:hidden"><span class="t" style="left:2.8px;top:3.9000000000000004px;font-size:12px;line-height:16px;letter-spacing:0.37px;color:#111;">Network</span></div></td><td style="border:0;border-right:1px solid #7d7d7d;border-bottom:1px solid #7d7d7d;height:24px;"><div style="position:relative;height:23px;overflow:hidden"><span class="t" style="left:2.8px;top:3.9000000000000004px;font-size:12px;line-height:16px;letter-spacing:0.22px;color:#111;">Domain</span></div></td><td style="border:0;border-right:1px solid #7d7d7d;border-bottom:1px solid #7d7d7d;height:24px;"><div style="position:relative;height:23px;overflow:hidden"><span class="t" style="left:2.8px;top:3.9000000000000004px;font-size:12px;line-height:16px;letter-spacing:0.09px;color:#111;">Enabled</span></div></td><td style="border:0;border-right:1px solid #7d7d7d;border-bottom:1px solid #7d7d7d;height:24px;"><div style="position:relative;height:23px;overflow:hidden"><svg class="i" style="left:11.7px;top:7.1px" width="10" height="9.4" viewBox="0 0 10 9.4" ><g fill="#4a4a4a"><rect x="2.8" y="0" width="4.2" height="2.1" rx="0.4"/><rect x="0" y="6.4" width="3.7" height="2.8" rx="0.4"/><rect x="6.1" y="6.4" width="3.7" height="2.8" rx="0.4"/></g><path d="M4.9 2.1 V4.4 M1.8 6.4 V4.4 H8 V6.4" fill="none" stroke="#4a4a4a" stroke-width="0.9"/></svg><span class="t" style="left:25.6px;top:3.9000000000000004px;font-size:12px;line-height:16px;letter-spacing:-0.15px;color:#111;">n10_60_219_0</span></div></td><td style="border:0;border-right:1px solid #7d7d7d;border-bottom:1px solid #7d7d7d;height:24px;"><div style="position:relative;height:23px;overflow:hidden"><svg class="i" style="left:11.5px;top:7.1px" width="9" height="9" viewBox="0 0 9 9" ><g stroke="#7c7c7c" stroke-width="1.5"><path d="M0.40 4.50 L8.60 4.50"/><path d="M2.45 0.95 L6.55 8.05"/><path d="M6.55 0.95 L2.45 8.05"/></g></svg><span class="t" style="left:25.6px;top:3.9000000000000004px;font-size:12px;line-height:16px;letter-spacing:-0.14px;color:#111;">Any</span></div></td><td style="border:0;border-right:1px solid #7d7d7d;border-bottom:1px solid #7d7d7d;height:24px;"><div style="position:relative;height:23px;overflow:hidden"><svg class="i" style="left:11.5px;top:7.1px" width="9" height="9" viewBox="0 0 9 9" ><g stroke="#7c7c7c" stroke-width="1.5"><path d="M0.40 4.50 L8.60 4.50"/><path d="M2.45 0.95 L6.55 8.05"/><path d="M6.55 0.95 L2.45 8.05"/></g></svg><span class="t" style="left:25.6px;top:3.9000000000000004px;font-size:12px;line-height:16px;letter-spacing:-0.14px;color:#111;">Any</span></div></td><td style="border:0;border-right:1px solid #7d7d7d;border-bottom:1px solid #7d7d7d;height:24px;"><div style="position:relative;height:23px;overflow:hidden"><svg class="i" style="left:11.5px;top:7.1px" width="9" height="9" viewBox="0 0 9 9" ><g stroke="#7c7c7c" stroke-width="1.5"><path d="M0.40 4.50 L8.60 4.50"/><path d="M2.45 0.95 L6.55 8.05"/><path d="M6.55 0.95 L2.45 8.05"/></g></svg><span class="t" style="left:25.6px;top:3.9000000000000004px;font-size:12px;line-height:16px;letter-spacing:-0.14px;color:#111;">Any</span></div></td><td style="border:0;border-right:1px solid #7d7d7d;border-bottom:1px solid #7d7d7d;height:24px;"><div style="position:relative;height:23px;overflow:hidden"><svg class="i" style="left:11.5px;top:7.1px" width="9" height="9" viewBox="0 0 9 9" ><g stroke="#7c7c7c" stroke-width="1.5"><path d="M0.40 4.50 L8.60 4.50"/><path d="M2.45 0.95 L6.55 8.05"/><path d="M6.55 0.95 L2.45 8.05"/></g></svg><span class="t" style="left:25.6px;top:3.9000000000000004px;font-size:12px;line-height:16px;letter-spacing:-0.14px;color:#111;">Any</span></div></td><td style="border:0;border-right:1px solid #7d7d7d;border-bottom:1px solid #7d7d7d;height:24px;"><div style="position:relative;height:23px;overflow:hidden"><svg class="i" style="left:9px;top:4.0px" width="14" height="14" viewBox="0 0 14 14" ><circle cx="7" cy="7" r="7" fill="#55b313"/><g fill="#fff"><rect x="1.8" y="7" width="10.4" height="1.7"/><rect x="3.3" y="8.6" width="1.5" height="2.6"/><rect x="9.2" y="8.6" width="1.5" height="2.6"/><path d="M4.6 2.4 H6.3 V6.2 H3.2 Z"/><path d="M7.7 2.4 H9.4 L10.8 6.2 H7.7 Z"/></g></svg><span class="t" style="left:25.6px;top:3.9000000000000004px;font-size:12px;line-height:16px;letter-spacing:0.05px;color:#111;">Accept</span></div></td><td style="border:0;border-right:1px solid #7d7d7d;border-bottom:1px solid #7d7d7d;height:24px;"><div style="position:relative;height:23px;overflow:hidden"><svg class="i" style="left:10px;top:3.0px" width="11" height="13.8" viewBox="0 0 11 13.8" ><rect x="0.6" y="1.9" width="9.8" height="11.2" rx="0.9" fill="#fff" stroke="#1f3354" stroke-width="1.2"/><path d="M1.6 2.9 V1.2 H4.2 V0.2 H6.8 V1.2 H9.4 V2.9 Z" fill="#1f3354"/><path d="M2.7 6.5 H8.3 M2.7 8.5 H8.3 M2.7 10.5 H8.3" stroke="#1f3354" stroke-width="1"/></svg><span class="t" style="left:25.6px;top:3.9000000000000004px;font-size:12px;line-height:16px;letter-spacing:-0.04px;color:#111;">Log</span></div></td></tr><tr><td style="border:0;border-right:1px solid #7d7d7d;border-bottom:1px solid #7d7d7d;height:24px;"><div style="position:relative;height:23px;overflow:hidden"><div class="b" style="left:8.8px;top:4.8px;width:13.4px;height:13.4px;border:1px solid #767676;border-radius:2.5px;background:#fff"></div></div></td><td style="border:0;border-right:1px solid #7d7d7d;border-bottom:1px solid #7d7d7d;height:24px;"><div style="position:relative;height:23px;overflow:hidden"><svg class="i" style="left:23px;top:3.0px" width="18" height="18" viewBox="0 0 18 18" ><path d="M5 14.5 H2.5 Q1.5 14.5 1.5 13.5 V2.5 Q1.5 1.5 2.5 1.5 H6.5 L9.5 4.5 V7.6" fill="none" stroke="#625ac2" stroke-width="1"/><path d="M6.5 1.5 V4.5 H9.5" fill="none" stroke="#625ac2" stroke-width="1"/><g transform="translate(5.5,16.6) rotate(-44)"><path d="M0 0 L2.6 -2.1 H11.8 V2.1 H2.6 Z" fill="#3d5db5"/><rect x="12.5" y="-2.1" width="2.7" height="4.2" fill="#3d5db5"/><path d="M0.6 0 L2.3 -1.3 V1.3 Z" fill="#fff"/><path d="M3.4 0 H11.2" stroke="#dfe6f7" stroke-width="0.7" stroke-dasharray="1 0.8"/></g></svg></div></td><td style="border:0;border-right:1px solid #7d7d7d;border-bottom:1px solid #7d7d7d;height:24px;"><div style="position:relative;height:23px;overflow:hidden"><span class="t" style="left:3.4px;top:3.9000000000000004px;font-size:12px;line-height:16px;letter-spacing:-0.21px;color:#111;">9</span></div></td><td style="border:0;border-right:1px solid #7d7d7d;border-bottom:1px solid #7d7d7d;height:24px;"><div style="position:relative;height:23px;overflow:hidden"></div></td><td style="border:0;border-right:1px solid #7d7d7d;border-bottom:1px solid #7d7d7d;height:24px;"><div style="position:relative;height:23px;overflow:hidden"><span class="t" style="left:2.8px;top:3.9000000000000004px;font-size:12px;line-height:16px;letter-spacing:0.14px;color:#111;">Ordered</span></div></td><td style="border:0;border-right:1px solid #7d7d7d;border-bottom:1px solid #7d7d7d;height:24px;"><div style="position:relative;height:23px;overflow:hidden"><span class="t" style="left:2.8px;top:3.9000000000000004px;font-size:12px;line-height:16px;letter-spacing:0.37px;color:#111;">Network</span></div></td><td style="border:0;border-right:1px solid #7d7d7d;border-bottom:1px solid #7d7d7d;height:24px;"><div style="position:relative;height:23px;overflow:hidden"><span class="t" style="left:2.8px;top:3.9000000000000004px;font-size:12px;line-height:16px;letter-spacing:0.22px;color:#111;">Domain</span></div></td><td style="border:0;border-right:1px solid #7d7d7d;border-bottom:1px solid #7d7d7d;height:24px;"><div style="position:relative;height:23px;overflow:hidden"><span class="t" style="left:2.8px;top:3.9000000000000004px;font-size:12px;line-height:16px;letter-spacing:0.09px;color:#111;">Enabled</span></div></td><td style="border:0;border-right:1px solid #7d7d7d;border-bottom:1px solid #7d7d7d;height:24px;"><div style="position:relative;height:23px;overflow:hidden"><svg class="i" style="left:11.7px;top:7.1px" width="10" height="9.4" viewBox="0 0 10 9.4" ><g fill="#4a4a4a"><rect x="2.8" y="0" width="4.2" height="2.1" rx="0.4"/><rect x="0" y="6.4" width="3.7" height="2.8" rx="0.4"/><rect x="6.1" y="6.4" width="3.7" height="2.8" rx="0.4"/></g><path d="M4.9 2.1 V4.4 M1.8 6.4 V4.4 H8 V6.4" fill="none" stroke="#4a4a4a" stroke-width="0.9"/></svg><span class="t" style="left:25.6px;top:3.9000000000000004px;font-size:12px;line-height:16px;letter-spacing:-0.15px;color:#111;">n10_120_219_0</span></div></td><td style="border:0;border-right:1px solid #7d7d7d;border-bottom:1px solid #7d7d7d;height:24px;"><div style="position:relative;height:23px;overflow:hidden"><svg class="i" style="left:11.5px;top:7.1px" width="9" height="9" viewBox="0 0 9 9" ><g stroke="#7c7c7c" stroke-width="1.5"><path d="M0.40 4.50 L8.60 4.50"/><path d="M2.45 0.95 L6.55 8.05"/><path d="M6.55 0.95 L2.45 8.05"/></g></svg><span class="t" style="left:25.6px;top:3.9000000000000004px;font-size:12px;line-height:16px;letter-spacing:-0.14px;color:#111;">Any</span></div></td><td style="border:0;border-right:1px solid #7d7d7d;border-bottom:1px solid #7d7d7d;height:24px;"><div style="position:relative;height:23px;overflow:hidden"><svg class="i" style="left:11.5px;top:7.1px" width="9" height="9" viewBox="0 0 9 9" ><g stroke="#7c7c7c" stroke-width="1.5"><path d="M0.40 4.50 L8.60 4.50"/><path d="M2.45 0.95 L6.55 8.05"/><path d="M6.55 0.95 L2.45 8.05"/></g></svg><span class="t" style="left:25.6px;top:3.9000000000000004px;font-size:12px;line-height:16px;letter-spacing:-0.14px;color:#111;">Any</span></div></td><td style="border:0;border-right:1px solid #7d7d7d;border-bottom:1px solid #7d7d7d;height:24px;"><div style="position:relative;height:23px;overflow:hidden"><svg class="i" style="left:11.5px;top:7.1px" width="9" height="9" viewBox="0 0 9 9" ><g stroke="#7c7c7c" stroke-width="1.5"><path d="M0.40 4.50 L8.60 4.50"/><path d="M2.45 0.95 L6.55 8.05"/><path d="M6.55 0.95 L2.45 8.05"/></g></svg><span class="t" style="left:25.6px;top:3.9000000000000004px;font-size:12px;line-height:16px;letter-spacing:-0.14px;color:#111;">Any</span></div></td><td style="border:0;border-right:1px solid #7d7d7d;border-bottom:1px solid #7d7d7d;height:24px;"><div style="position:relative;height:23px;overflow:hidden"><svg class="i" style="left:11.5px;top:7.1px" width="9" height="9" viewBox="0 0 9 9" ><g stroke="#7c7c7c" stroke-width="1.5"><path d="M0.40 4.50 L8.60 4.50"/><path d="M2.45 0.95 L6.55 8.05"/><path d="M6.55 0.95 L2.45 8.05"/></g></svg><span class="t" style="left:25.6px;top:3.9000000000000004px;font-size:12px;line-height:16px;letter-spacing:-0.14px;color:#111;">Any</span></div></td><td style="border:0;border-right:1px solid #7d7d7d;border-bottom:1px solid #7d7d7d;height:24px;"><div style="position:relative;height:23px;overflow:hidden"><svg class="i" style="left:9px;top:4.0px" width="14" height="14" viewBox="0 0 14 14" ><circle cx="7" cy="7" r="7" fill="#55b313"/><g fill="#fff"><rect x="1.8" y="7" width="10.4" height="1.7"/><rect x="3.3" y="8.6" width="1.5" height="2.6"/><rect x="9.2" y="8.6" width="1.5" height="2.6"/><path d="M4.6 2.4 H6.3 V6.2 H3.2 Z"/><path d="M7.7 2.4 H9.4 L10.8 6.2 H7.7 Z"/></g></svg><span class="t" style="left:25.6px;top:3.9000000000000004px;font-size:12px;line-height:16px;letter-spacing:0.05px;color:#111;">Accept</span></div></td><td style="border:0;border-right:1px solid #7d7d7d;border-bottom:1px solid #7d7d7d;height:24px;"><div style="position:relative;height:23px;overflow:hidden"><svg class="i" style="left:10px;top:3.0px" width="11" height="13.8" viewBox="0 0 11 13.8" ><rect x="0.6" y="1.9" width="9.8" height="11.2" rx="0.9" fill="#fff" stroke="#1f3354" stroke-width="1.2"/><path d="M1.6 2.9 V1.2 H4.2 V0.2 H6.8 V1.2 H9.4 V2.9 Z" fill="#1f3354"/><path d="M2.7 6.5 H8.3 M2.7 8.5 H8.3 M2.7 10.5 H8.3" stroke="#1f3354" stroke-width="1"/></svg><span class="t" style="left:25.6px;top:3.9000000000000004px;font-size:12px;line-height:16px;letter-spacing:-0.04px;color:#111;">Log</span></div></td></tr><tr><td style="border:0;border-right:1px solid #7d7d7d;border-bottom:1px solid #7d7d7d;height:24px;"><div style="position:relative;height:23px;overflow:hidden"><div class="b" style="left:8.8px;top:4.8px;width:13.4px;height:13.4px;border:1px solid #767676;border-radius:2.5px;background:#fff"></div></div></td><td style="border:0;border-right:1px solid #7d7d7d;border-bottom:1px solid #7d7d7d;height:24px;"><div style="position:relative;height:23px;overflow:hidden"><svg class="i" style="left:23px;top:3.0px" width="18" height="18" viewBox="0 0 18 18" ><path d="M5 14.5 H2.5 Q1.5 14.5 1.5 13.5 V2.5 Q1.5 1.5 2.5 1.5 H6.5 L9.5 4.5 V7.6" fill="none" stroke="#625ac2" stroke-width="1"/><path d="M6.5 1.5 V4.5 H9.5" fill="none" stroke="#625ac2" stroke-width="1"/><g transform="translate(5.5,16.6) rotate(-44)"><path d="M0 0 L2.6 -2.1 H11.8 V2.1 H2.6 Z" fill="#3d5db5"/><rect x="12.5" y="-2.1" width="2.7" height="4.2" fill="#3d5db5"/><path d="M0.6 0 L2.3 -1.3 V1.3 Z" fill="#fff"/><path d="M3.4 0 H11.2" stroke="#dfe6f7" stroke-width="0.7" stroke-dasharray="1 0.8"/></g></svg></div></td><td style="border:0;border-right:1px solid #7d7d7d;border-bottom:1px solid #7d7d7d;height:24px;"><div style="position:relative;height:23px;overflow:hidden"><span class="t" style="left:3.4px;top:3.9000000000000004px;font-size:12px;line-height:16px;letter-spacing:-0.21px;color:#111;">10</span></div></td><td style="border:0;border-right:1px solid #7d7d7d;border-bottom:1px solid #7d7d7d;height:24px;"><div style="position:relative;height:23px;overflow:hidden"></div></td><td style="border:0;border-right:1px solid #7d7d7d;border-bottom:1px solid #7d7d7d;height:24px;"><div style="position:relative;height:23px;overflow:hidden"><span class="t" style="left:2.8px;top:3.9000000000000004px;font-size:12px;line-height:16px;letter-spacing:0.14px;color:#111;">Ordered</span></div></td><td style="border:0;border-right:1px solid #7d7d7d;border-bottom:1px solid #7d7d7d;height:24px;"><div style="position:relative;height:23px;overflow:hidden"><span class="t" style="left:2.8px;top:3.9000000000000004px;font-size:12px;line-height:16px;letter-spacing:0.37px;color:#111;">Network</span></div></td><td style="border:0;border-right:1px solid #7d7d7d;border-bottom:1px solid #7d7d7d;height:24px;"><div style="position:relative;height:23px;overflow:hidden"><span class="t" style="left:2.8px;top:3.9000000000000004px;font-size:12px;line-height:16px;letter-spacing:0.22px;color:#111;">Domain</span></div></td><td style="border:0;border-right:1px solid #7d7d7d;border-bottom:1px solid #7d7d7d;height:24px;"><div style="position:relative;height:23px;overflow:hidden"><span class="t" style="left:2.8px;top:3.9000000000000004px;font-size:12px;line-height:16px;letter-spacing:0.09px;color:#111;">Enabled</span></div></td><td style="border:0;border-right:1px solid #7d7d7d;border-bottom:1px solid #7d7d7d;height:24px;"><div style="position:relative;height:23px;overflow:hidden"><svg class="i" style="left:11.7px;top:7.1px" width="10" height="9.4" viewBox="0 0 10 9.4" ><g fill="#4a4a4a"><rect x="2.8" y="0" width="4.2" height="2.1" rx="0.4"/><rect x="0" y="6.4" width="3.7" height="2.8" rx="0.4"/><rect x="6.1" y="6.4" width="3.7" height="2.8" rx="0.4"/></g><path d="M4.9 2.1 V4.4 M1.8 6.4 V4.4 H8 V6.4" fill="none" stroke="#4a4a4a" stroke-width="0.9"/></svg><span class="t" style="left:25.6px;top:3.9000000000000004px;font-size:12px;line-height:16px;letter-spacing:-0.09px;color:#111;">n10_110_219_0</span></div></td><td style="border:0;border-right:1px solid #7d7d7d;border-bottom:1px solid #7d7d7d;height:24px;"><div style="position:relative;height:23px;overflow:hidden"><svg class="i" style="left:11.5px;top:7.1px" width="9" height="9" viewBox="0 0 9 9" ><g stroke="#7c7c7c" stroke-width="1.5"><path d="M0.40 4.50 L8.60 4.50"/><path d="M2.45 0.95 L6.55 8.05"/><path d="M6.55 0.95 L2.45 8.05"/></g></svg><span class="t" style="left:25.6px;top:3.9000000000000004px;font-size:12px;line-height:16px;letter-spacing:-0.14px;color:#111;">Any</span></div></td><td style="border:0;border-right:1px solid #7d7d7d;border-bottom:1px solid #7d7d7d;height:24px;"><div style="position:relative;height:23px;overflow:hidden"><svg class="i" style="left:11.5px;top:7.1px" width="9" height="9" viewBox="0 0 9 9" ><g stroke="#7c7c7c" stroke-width="1.5"><path d="M0.40 4.50 L8.60 4.50"/><path d="M2.45 0.95 L6.55 8.05"/><path d="M6.55 0.95 L2.45 8.05"/></g></svg><span class="t" style="left:25.6px;top:3.9000000000000004px;font-size:12px;line-height:16px;letter-spacing:-0.14px;color:#111;">Any</span></div></td><td style="border:0;border-right:1px solid #7d7d7d;border-bottom:1px solid #7d7d7d;height:24px;"><div style="position:relative;height:23px;overflow:hidden"><svg class="i" style="left:11.5px;top:7.1px" width="9" height="9" viewBox="0 0 9 9" ><g stroke="#7c7c7c" stroke-width="1.5"><path d="M0.40 4.50 L8.60 4.50"/><path d="M2.45 0.95 L6.55 8.05"/><path d="M6.55 0.95 L2.45 8.05"/></g></svg><span class="t" style="left:25.6px;top:3.9000000000000004px;font-size:12px;line-height:16px;letter-spacing:-0.14px;color:#111;">Any</span></div></td><td style="border:0;border-right:1px solid #7d7d7d;border-bottom:1px solid #7d7d7d;height:24px;"><div style="position:relative;height:23px;overflow:hidden"><svg class="i" style="left:11.5px;top:7.1px" width="9" height="9" viewBox="0 0 9 9" ><g stroke="#7c7c7c" stroke-width="1.5"><path d="M0.40 4.50 L8.60 4.50"/><path d="M2.45 0.95 L6.55 8.05"/><path d="M6.55 0.95 L2.45 8.05"/></g></svg><span class="t" style="left:25.6px;top:3.9000000000000004px;font-size:12px;line-height:16px;letter-spacing:-0.14px;color:#111;">Any</span></div></td><td style="border:0;border-right:1px solid #7d7d7d;border-bottom:1px solid #7d7d7d;height:24px;"><div style="position:relative;height:23px;overflow:hidden"><svg class="i" style="left:9px;top:4.0px" width="14" height="14" viewBox="0 0 14 14" ><circle cx="7" cy="7" r="7" fill="#55b313"/><g fill="#fff"><rect x="1.8" y="7" width="10.4" height="1.7"/><rect x="3.3" y="8.6" width="1.5" height="2.6"/><rect x="9.2" y="8.6" width="1.5" height="2.6"/><path d="M4.6 2.4 H6.3 V6.2 H3.2 Z"/><path d="M7.7 2.4 H9.4 L10.8 6.2 H7.7 Z"/></g></svg><span class="t" style="left:25.6px;top:3.9000000000000004px;font-size:12px;line-height:16px;letter-spacing:0.05px;color:#111;">Accept</span></div></td><td style="border:0;border-right:1px solid #7d7d7d;border-bottom:1px solid #7d7d7d;height:24px;"><div style="position:relative;height:23px;overflow:hidden"><svg class="i" style="left:10px;top:3.0px" width="11" height="13.8" viewBox="0 0 11 13.8" ><rect x="0.6" y="1.9" width="9.8" height="11.2" rx="0.9" fill="#fff" stroke="#1f3354" stroke-width="1.2"/><path d="M1.6 2.9 V1.2 H4.2 V0.2 H6.8 V1.2 H9.4 V2.9 Z" fill="#1f3354"/><path d="M2.7 6.5 H8.3 M2.7 8.5 H8.3 M2.7 10.5 H8.3" stroke="#1f3354" stroke-width="1"/></svg><span class="t" style="left:25.6px;top:3.9000000000000004px;font-size:12px;line-height:16px;letter-spacing:-0.04px;color:#111;">Log</span></div></td></tr></tbody></table></div><div class="b" style="left:1650px;top:392px;width:14.5px;height:384px;background:#fafafa"></div><svg class="i" style="left:1653px;top:402px" width="9" height="5.4" viewBox="0 0 9 5.4" ><path d="M0 5.4 L4.5 0 L9 5.4 Z" fill="#9a9a9a"/></svg><div class="b" style="left:1653.5px;top:426px;width:8.5px;height:326.5px;background:#8b8b8b;border-radius:4.5px"></div><svg class="i" style="left:1653px;top:761px" width="9" height="5.4" viewBox="0 0 9 5.4" ><path d="M0 0 L4.5 5.4 L9 0 Z" fill="#9a9a9a"/></svg><div class="b" style="left:48px;top:776px;width:1616.5px;height:15px;background:#fafafa"></div><svg class="i" style="left:56.8px;top:779.2px" width="5.6" height="8.8" viewBox="0 0 5.6 8.8" ><path d="M5.6 0 L0 4.4 L5.6 8.8 Z" fill="#8a8a8a"/></svg><div class="b" style="left:71px;top:779.2px;width:1031.5px;height:8.8px;background:#8b8b8b;border-radius:4.5px"></div><svg class="i" style="left:1636px;top:779.2px" width="5.2" height="8.8" viewBox="0 0 5.2 8.8" ><path d="M0 0 L5.2 4.4 L0 8.8 Z" fill="#8a8a8a"/></svg><svg class="i" style="left:1433px;top:813.5px" width="8" height="11" viewBox="0 0 8 11" ><path d="M6.6 1 L1.8 5.5 L6.6 10" fill="none" stroke="#111" stroke-width="2.4"/></svg><span class="t" style="left:1448.4px;top:809.7px;font-size:12.4px;line-height:16px;letter-spacing:-0.36px;color:#666;">Page</span><div class="b" style="left:1479px;top:805px;width:20px;height:24px;border:1px solid #767676;border-radius:3px;background:#fff"></div><span class="t" style="left:1483px;top:809.7px;font-size:12.4px;line-height:16px;letter-spacing:-0.9px;color:#666;">1</span><span class="t" style="left:1501.7px;top:809.7px;font-size:12.4px;line-height:16px;letter-spacing:0.08px;color:#666;">of 2</span><svg class="i" style="left:1530px;top:813.5px" width="8" height="11" viewBox="0 0 8 11" ><path d="M1.4 1 L6.2 5.5 L1.4 10" fill="none" stroke="#111" stroke-width="2.4"/></svg><span class="t" style="left:1551.6px;top:809.7px;font-size:12.4px;line-height:16px;letter-spacing:0.07px;color:#666;">View 1-10 of 18</span></main>
<div class="crn" style="left:0;background:radial-gradient(circle at 8px 0,transparent 7.4px,#e2e2e2 8px)"></div><div class="crn" style="right:0;background:radial-gradient(circle at 0 0,transparent 7.4px,#e6e6e6 8px)"></div>
</div>
</body></html>
